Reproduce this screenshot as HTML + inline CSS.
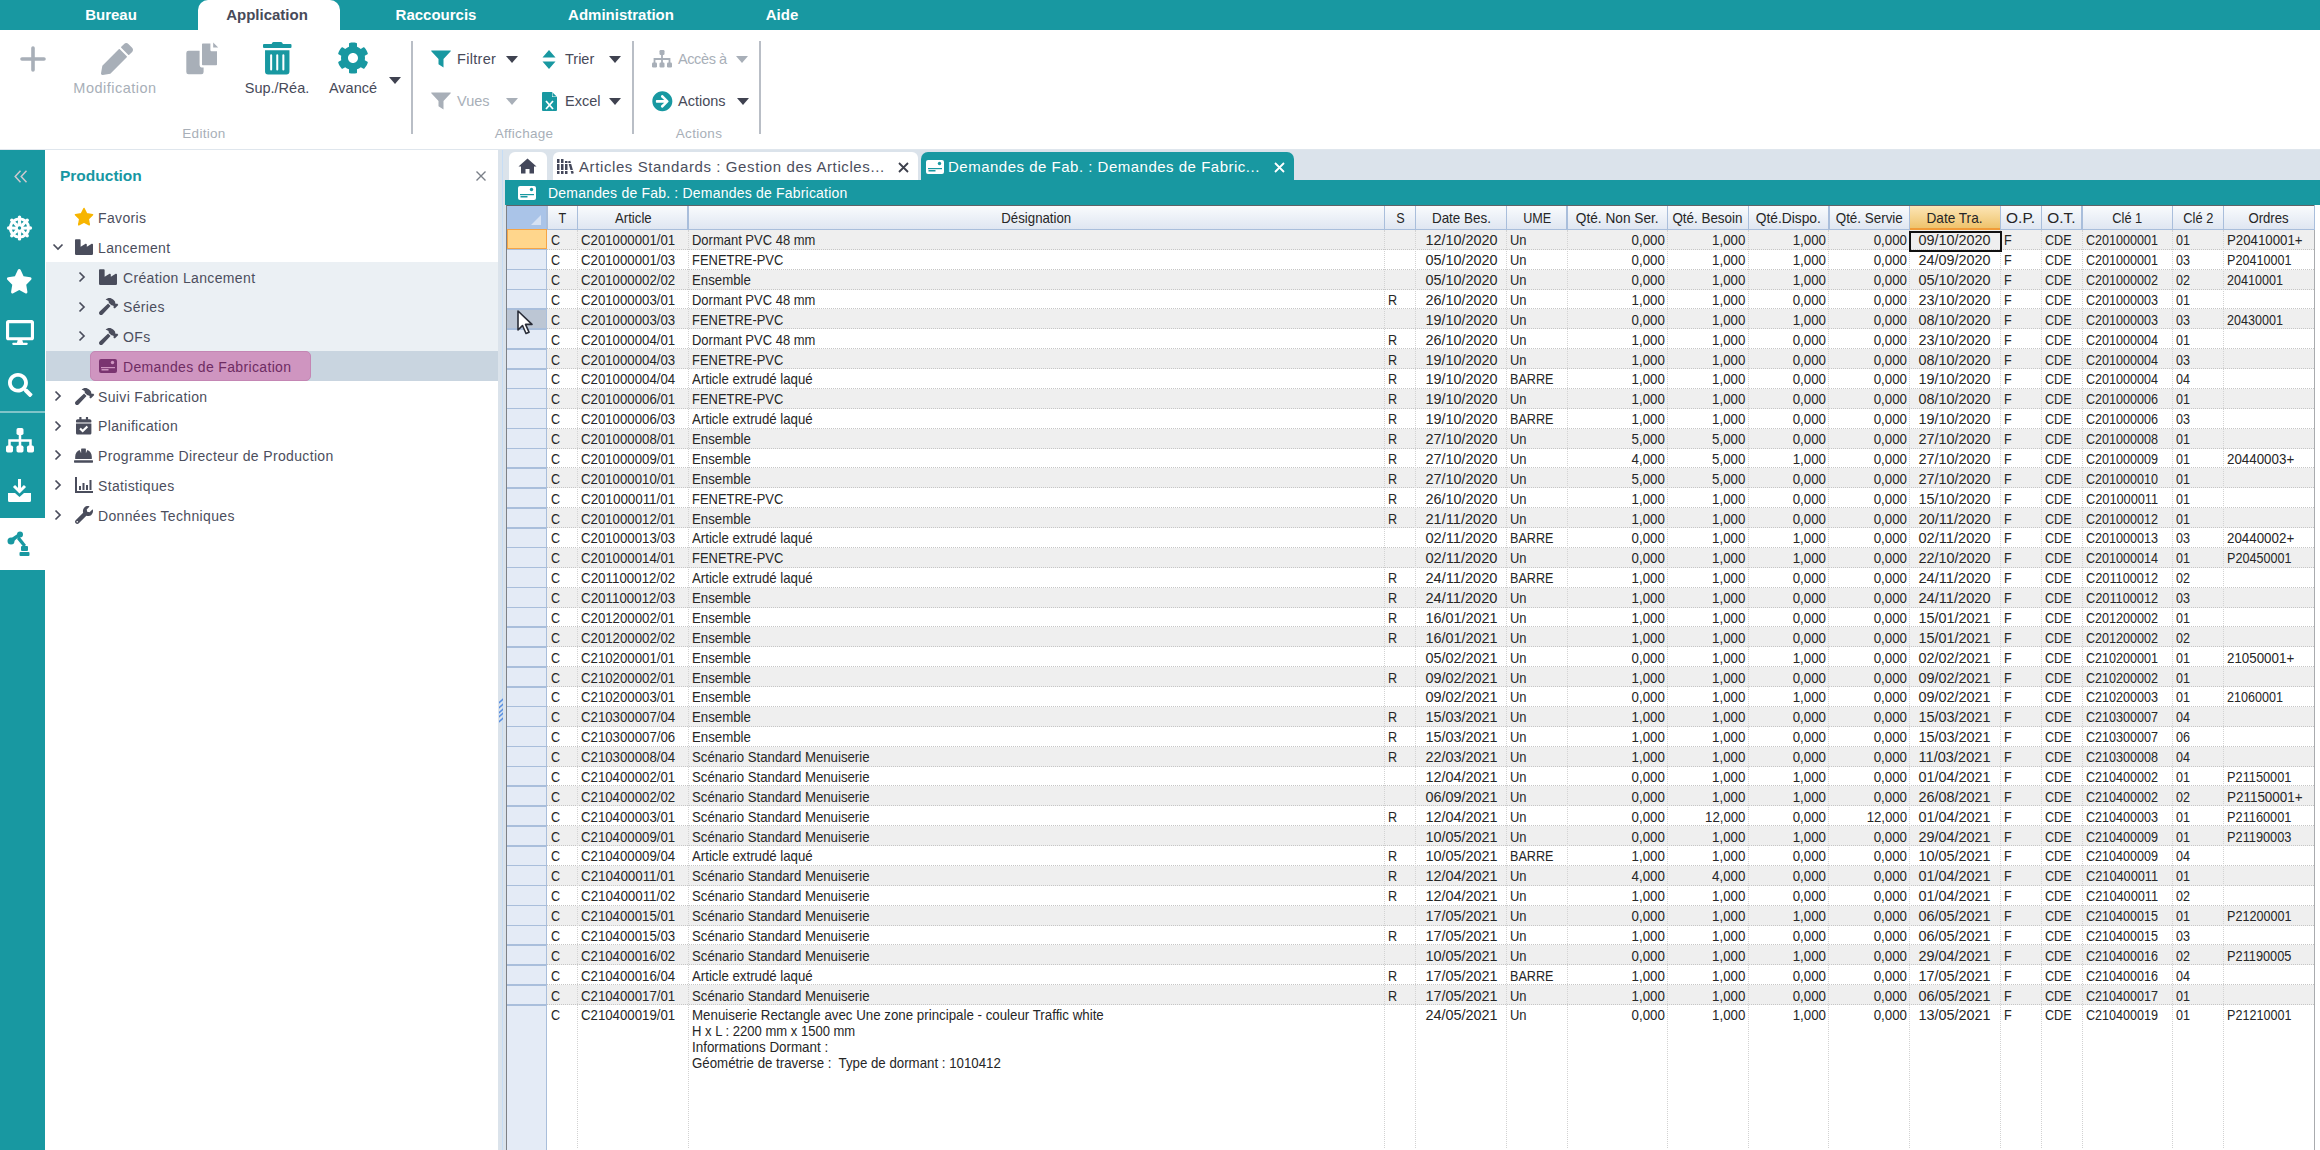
<!DOCTYPE html>
<html><head><meta charset="utf-8"><title>Demandes de Fabrication</title>
<style>
*{margin:0;padding:0;box-sizing:border-box}
html,body{width:2320px;height:1150px;overflow:hidden;background:#fff;font-family:"Liberation Sans", sans-serif;}
.a{position:absolute}
.t{position:absolute;white-space:nowrap;line-height:1}
.nav{color:#fff;font-weight:bold;font-size:15px;top:7px}
.rl{font-size:14.5px;color:#474a59}
.rg{font-size:14.5px;color:#a8afb8}
.tree{font-size:14px;color:#4b4e5d;letter-spacing:0.35px}
.g{font-size:15px;color:#262626;line-height:1;white-space:pre}
.hd{font-size:15px;color:#262626;line-height:1;white-space:pre}
svg{position:absolute;overflow:visible}
</style></head><body>

<div class="a" style="left:0;top:0;width:2320px;height:30px;background:#1898a1"></div>
<div class="a" style="left:198px;top:0;width:142px;height:31px;background:#fff;border-radius:10px 10px 0 0"></div>
<div class="t nav" style="left:-89px;width:400px;text-align:center;top:7px;">Bureau</div>
<div class="t nav" style="left:67px;width:400px;text-align:center;top:7px;color:#474a59">Application</div>
<div class="t nav" style="left:236px;width:400px;text-align:center;top:7px;">Raccourcis</div>
<div class="t nav" style="left:421px;width:400px;text-align:center;top:7px;">Administration</div>
<div class="t nav" style="left:582px;width:400px;text-align:center;top:7px;">Aide</div>
<div class="a" style="left:0;top:149px;width:2320px;height:1px;background:#dfe6ed"></div>
<div class="a" style="left:411px;top:41px;width:1.5px;height:93px;background:#b9bec6"></div>
<div class="a" style="left:632px;top:41px;width:1.5px;height:93px;background:#b9bec6"></div>
<div class="a" style="left:759px;top:41px;width:1.5px;height:93px;background:#b9bec6"></div>
<svg style="left:20px;top:46px" width="26" height="26" viewBox="0 0 26 26"><path d="M13 2v22M2 13h22" stroke="#a8afb8" stroke-width="3.6" stroke-linecap="round"/></svg>
<svg style="left:100.5px;top:42.7px" width="32" height="32" viewBox="0 0 512 512" preserveAspectRatio="none"><path d="M497.9 142.1l-46.1 46.1c-4.7 4.7-12.3 4.7-17 0l-111-111c-4.7-4.7-4.7-12.3 0-17l46.1-46.1c18.7-18.7 49.1-18.7 67.9 0l60.1 60.1c18.8 18.7 18.8 49.1 0 67.9zM284.2 99.8L21.6 362.4.4 483.9c-2.9 16.4 11.4 30.6 27.8 27.8l121.5-21.3 262.6-262.6c4.7-4.7 4.7-12.3 0-17l-111-111c-4.8-4.7-12.4-4.7-17.1 0z" fill="#a8afb8"/></svg>
<svg style="left:185px;top:41px" width="36" height="36" viewBox="0 0 36 36"><rect x="1.3" y="9.7" width="17.3" height="23.6" rx="2.2" fill="#a8afb8"/><path d="M17.8 1.3h8.8v7.8h6.6v14.3q0 2-2 2h-13.4q-2 0-2-2v-20.1q0-2 2-2z" fill="#a8afb8" stroke="#fff" stroke-width="2.4" stroke-linejoin="round"/><path d="M28.2 1.5l5 5h-5z" fill="#a8afb8"/></svg>
<svg style="left:262.5px;top:41.8px" width="28.5" height="32.6" viewBox="0 0 448 512" preserveAspectRatio="none"><path d="M32 464a48 48 0 0 0 48 48h288a48 48 0 0 0 48-48V128H32zm272-256a16 16 0 0 1 32 0v224a16 16 0 0 1-32 0zm-96 0a16 16 0 0 1 32 0v224a16 16 0 0 1-32 0zm-96 0a16 16 0 0 1 32 0v224a16 16 0 0 1-32 0zM432 32H312l-9.4-18.7A24 24 0 0 0 281.1 0H166.8a23.72 23.72 0 0 0-21.4 13.3L136 32H16A16 16 0 0 0 0 48v32a16 16 0 0 0 16 16h416a16 16 0 0 0 16-16V48a16 16 0 0 0-16-16z" fill="#1898a1"/></svg>
<svg style="left:337px;top:42px" width="32" height="32" viewBox="0 0 512 512" preserveAspectRatio="none"><path d="M487.4 315.7l-42.6-24.6c4.3-23.2 4.3-47 0-70.2l42.6-24.6c4.9-2.8 7.1-8.6 5.5-14-11.1-35.6-30-67.8-54.7-94.6-3.8-4.1-10-5.1-14.8-2.3L380.8 110c-17.9-15.4-38.5-27.3-60.8-35.1V25.8c0-5.6-3.9-10.5-9.4-11.7-36.7-8.2-74.3-7.8-109.2 0-5.5 1.2-9.4 6.1-9.4 11.7V75c-22.2 7.9-42.8 19.8-60.8 35.1L88.7 85.5c-4.9-2.8-11-1.9-14.8 2.3-24.7 26.7-43.6 58.9-54.7 94.6-1.7 5.4.6 11.2 5.5 14L67.3 221c-4.3 23.2-4.3 47 0 70.2l-42.6 24.6c-4.9 2.8-7.1 8.6-5.5 14 11.1 35.6 30 67.8 54.7 94.6 3.8 4.1 10 5.1 14.8 2.3l42.6-24.6c17.9 15.4 38.5 27.3 60.8 35.1v49.2c0 5.6 3.9 10.5 9.4 11.7 36.7 8.2 74.3 7.8 109.2 0 5.5-1.2 9.4-6.1 9.4-11.7v-49.2c22.2-7.9 42.8-19.8 60.8-35.1l42.6 24.6c4.9 2.8 11 1.9 14.8-2.3 24.7-26.7 43.6-58.9 54.7-94.6 1.5-5.5-.7-11.3-5.6-14.1zM256 336c-44.1 0-80-35.9-80-80s35.9-80 80-80 80 35.9 80 80-35.9 80-80 80z" fill="#1898a1"/></svg>
<div class="t rg" style="left:-85px;width:400px;text-align:center;top:80.7px;letter-spacing:0.5px">Modification</div>
<div class="t rl" style="left:77px;width:400px;text-align:center;top:80.7px;">Sup./Réa.</div>
<div class="t rl" style="left:153px;width:400px;text-align:center;top:80.7px;">Avancé</div>
<div class="t rg" style="left:4px;width:400px;text-align:center;top:126.5px;font-size:13.5px;letter-spacing:0.3px">Edition</div>
<div class="t rg" style="left:324px;width:400px;text-align:center;top:126.5px;font-size:13.5px;letter-spacing:0.3px">Affichage</div>
<div class="t rg" style="left:499px;width:400px;text-align:center;top:126.5px;font-size:13.5px;letter-spacing:0.3px">Actions</div>
<svg style="left:389px;top:76.5px" width="12" height="7" viewBox="0 0 12 7"><path d="M0 0h12l-6 7z" fill="#3f4250"/></svg>
<svg style="left:431px;top:50px" width="20" height="18" viewBox="0 0 20 18"><path d="M0.5 0.5h19q0.6 0 0.2 0.7l-7.2 7.8v8.5l-5-3.2v-5.3l-7.2-7.8q-0.4-0.7 0.2-0.7z" fill="#1898a1"/></svg>
<svg style="left:431px;top:92px" width="20" height="18" viewBox="0 0 20 18"><path d="M0.5 0.5h19q0.6 0 0.2 0.7l-7.2 7.8v8.5l-5-3.2v-5.3l-7.2-7.8q-0.4-0.7 0.2-0.7z" fill="#a8afb8"/></svg>
<div class="t rl" style="left:457px;top:52.2px;letter-spacing:0.3px">Filtrer</div>
<div class="t rg" style="left:457px;top:94.1px">Vues</div>
<svg style="left:506px;top:55.5px" width="12" height="7" viewBox="0 0 12 7"><path d="M0 0h12l-6 7z" fill="#3f4250"/></svg>
<svg style="left:506px;top:97.5px" width="12" height="7" viewBox="0 0 12 7"><path d="M0 0h12l-6 7z" fill="#a8afb8"/></svg>
<svg style="left:542px;top:50px" width="14" height="19" viewBox="0 0 14 19"><path d="M7 0l6.5 7.5h-13z M7 19l6.5-7.5h-13z" fill="#1898a1"/></svg>
<div class="t rl" style="left:565px;top:52.2px">Trier</div>
<svg style="left:609px;top:55.5px" width="12" height="7" viewBox="0 0 12 7"><path d="M0 0h12l-6 7z" fill="#3f4250"/></svg>
<svg style="left:542px;top:92px" width="15" height="19" viewBox="0 0 15 19"><path d="M1 0h9l5 5v13q0 1-1 1h-13q-1 0-1-1v-17q0-1 1-1z" fill="#1898a1"/><path d="M10 0v5h5z" fill="#fff"/><path d="M10.5 0.5l4 4h-4z" fill="#1898a1"/><path d="M4 9l7 8M11 9l-7 8" stroke="#fff" stroke-width="1.8"/></svg>
<div class="t rl" style="left:565px;top:94.1px">Excel</div>
<svg style="left:609px;top:97.5px" width="12" height="7" viewBox="0 0 12 7"><path d="M0 0h12l-6 7z" fill="#3f4250"/></svg>
<svg style="left:652px;top:50px" width="20" height="18.0" viewBox="0 0 20 18"><rect x="7.5" y="0" width="5" height="5" rx="1.2" fill="#a8afb8"/><rect x="0" y="12.5" width="5" height="5" rx="1.2" fill="#a8afb8"/><rect x="7.5" y="12.5" width="5" height="5" rx="1.2" fill="#a8afb8"/><rect x="15" y="12.5" width="5" height="5" rx="1.2" fill="#a8afb8"/><path d="M10 4v9M2.5 13v-4h15v4" stroke="#a8afb8" stroke-width="1.8" fill="none"/></svg>
<div class="t rg" style="left:678px;top:52.2px;letter-spacing:-0.4px">Accès à</div>
<svg style="left:736px;top:55.5px" width="12" height="7" viewBox="0 0 12 7"><path d="M0 0h12l-6 7z" fill="#a8afb8"/></svg>
<svg style="left:651.5px;top:91px" width="20.7" height="20.7" viewBox="0 0 512 512" preserveAspectRatio="none"><path d="M256 8c137 0 248 111 248 248S393 504 256 504 8 393 8 256 119 8 256 8zm-28.9 143.6l75.5 72.4H120c-13.3 0-24 10.7-24 24v16c0 13.3 10.7 24 24 24h182.6l-75.5 72.4c-9.7 9.3-9.9 24.8-.4 34.3l11 10.9c9.4 9.4 24.6 9.4 33.9 0L404.3 273c9.4-9.4 9.4-24.6 0-33.9L271.6 106.3c-9.4-9.4-24.6-9.4-33.9 0l-11 10.9c-9.5 9.6-9.3 25.1.4 34.4z" fill="#1898a1"/></svg>
<div class="t rl" style="left:678px;top:94.1px">Actions</div>
<svg style="left:737px;top:97.5px" width="12" height="7" viewBox="0 0 12 7"><path d="M0 0h12l-6 7z" fill="#3f4250"/></svg>
<div class="a" style="left:0;top:150px;width:44.5px;height:1000px;background:#1898a1"></div>
<div class="a" style="left:0;top:518px;width:44.5px;height:52px;background:#fff"></div>
<div class="a" style="left:0;top:411px;width:44.5px;height:2px;background:#7fc4c9"></div>
<svg style="left:13.5px;top:170px" width="14" height="13" viewBox="0 0 14 13"><path d="M6.5 0.8l-5.3 5.7 5.3 5.7M12.5 0.8l-5.3 5.7 5.3 5.7" stroke="#cdc8ce" stroke-width="1.5" fill="none"/></svg>
<svg style="left:0;top:0" width="1" height="1"><circle cx="19.5" cy="228" r="10.6" fill="#fff"/><circle cx="19.50" cy="217.10" r="1.7" fill="#fff"/><circle cx="27.21" cy="220.29" r="1.7" fill="#fff"/><circle cx="30.40" cy="228.00" r="1.7" fill="#fff"/><circle cx="27.21" cy="235.71" r="1.7" fill="#fff"/><circle cx="19.50" cy="238.90" r="1.7" fill="#fff"/><circle cx="11.79" cy="235.71" r="1.7" fill="#fff"/><circle cx="8.60" cy="228.00" r="1.7" fill="#fff"/><circle cx="11.79" cy="220.29" r="1.7" fill="#fff"/><path d="M21.33 224.22 L21.01 220.55 A7.6 7.6 0 0 1 23.70 221.67 L20.88 224.03 A4.2 4.2 0 0 0 21.33 224.22Z" fill="#1898a1"/><path d="M23.47 226.62 L25.83 223.80 A7.6 7.6 0 0 1 26.95 226.49 L23.28 226.17 A4.2 4.2 0 0 0 23.47 226.62Z" fill="#1898a1"/><path d="M23.28 229.83 L26.95 229.51 A7.6 7.6 0 0 1 25.83 232.20 L23.47 229.38 A4.2 4.2 0 0 0 23.28 229.83Z" fill="#1898a1"/><path d="M20.88 231.97 L23.70 234.33 A7.6 7.6 0 0 1 21.01 235.45 L21.33 231.78 A4.2 4.2 0 0 0 20.88 231.97Z" fill="#1898a1"/><path d="M17.67 231.78 L17.99 235.45 A7.6 7.6 0 0 1 15.30 234.33 L18.12 231.97 A4.2 4.2 0 0 0 17.67 231.78Z" fill="#1898a1"/><path d="M15.53 229.38 L13.17 232.20 A7.6 7.6 0 0 1 12.05 229.51 L15.72 229.83 A4.2 4.2 0 0 0 15.53 229.38Z" fill="#1898a1"/><path d="M15.72 226.17 L12.05 226.49 A7.6 7.6 0 0 1 13.17 223.80 L15.53 226.62 A4.2 4.2 0 0 0 15.72 226.17Z" fill="#1898a1"/><path d="M18.12 224.03 L15.30 221.67 A7.6 7.6 0 0 1 17.99 220.55 L17.67 224.22 A4.2 4.2 0 0 0 18.12 224.03Z" fill="#1898a1"/><circle cx="19.5" cy="228" r="1.7" fill="#1898a1"/></svg>
<svg style="left:6.3px;top:268.5px" width="26.5" height="24.5" viewBox="0 0 576 512" preserveAspectRatio="none"><path d="M259.3 17.8L194 150.2 47.9 171.5c-26.2 3.8-36.7 36.1-17.7 54.6l105.7 103-25 145.5c-4.5 26.3 23.2 46 46.4 33.7L288 439.6l130.7 68.7c23.2 12.2 50.9-7.4 46.4-33.7l-25-145.5 105.7-103c19-18.5 8.5-50.8-17.7-54.6L382 150.2 316.7 17.8c-11.7-23.6-45.6-23.9-57.4 0z" fill="#fff"/></svg>
<svg style="left:5.5px;top:320px" width="28" height="25" viewBox="0 0 576 512" preserveAspectRatio="none"><path d="M528 0H48C21.5 0 0 21.5 0 48v320c0 26.5 21.5 48 48 48h192l-16 48h-72c-13.3 0-24 10.7-24 24s10.7 24 24 24h272c13.3 0 24-10.7 24-24s-10.7-24-24-24h-72l-16-48h192c26.5 0 48-21.5 48-48V48c0-26.5-21.5-48-48-48zm-16 352H64V64h448v288z" fill="#fff"/></svg>
<svg style="left:7.6px;top:372.8px" width="24.5" height="24" viewBox="0 0 512 512" preserveAspectRatio="none"><path d="M505 442.7L405.3 343c-4.5-4.5-10.6-7-17-7H372c27.6-35.3 44-79.7 44-128C416 93.1 322.9 0 208 0S0 93.1 0 208s93.1 208 208 208c48.3 0 92.7-16.4 128-44v16.3c0 6.4 2.5 12.5 7 17l99.7 99.7c9.4 9.4 24.6 9.4 33.9 0l28.3-28.3c9.4-9.4 9.4-24.6.1-34zM208 336c-70.7 0-128-57.2-128-128 0-70.7 57.2-128 128-128 70.7 0 128 57.2 128 128 0 70.7-57.2 128-128 128z" fill="#fff"/></svg>
<svg style="left:5.5px;top:428px" width="28" height="25.2" viewBox="0 0 20 18"><rect x="7.5" y="0" width="5" height="5" rx="1.2" fill="#fff"/><rect x="0" y="12.5" width="5" height="5" rx="1.2" fill="#fff"/><rect x="7.5" y="12.5" width="5" height="5" rx="1.2" fill="#fff"/><rect x="15" y="12.5" width="5" height="5" rx="1.2" fill="#fff"/><path d="M10 4v9M2.5 13v-4h15v4" stroke="#fff" stroke-width="1.8" fill="none"/></svg>
<svg style="left:7px;top:478px" width="25" height="25" viewBox="0 0 25 25"><path d="M12.5 1v12M7 8l5.5 5.5 5.5-5.5" stroke="#fff" stroke-width="3" fill="none"/><path d="M1 15h7l4.5 4 4.5-4h7v7.5q0 1.5-1.5 1.5h-20q-1.5 0-1.5-1.5z" fill="#fff"/></svg>
<svg style="left:7px;top:531px" width="24" height="26" viewBox="0 0 24 26"><circle cx="4" cy="10" r="3.5" fill="#1898a1"/><path d="M3 8l9-6 2 2-8 7z" fill="#1898a1"/><circle cx="13" cy="3.5" r="3" fill="#1898a1"/><path d="M12 5l7 9-2.5 2-6.5-8z" fill="#1898a1"/><rect x="14" y="15" width="7" height="5" rx="1" fill="#1898a1"/><rect x="12.5" y="21" width="10" height="4" rx="1" fill="#1898a1"/></svg>
<div class="t" style="left:60px;top:168px;font-size:15.5px;font-weight:bold;color:#1797a3">Production</div>
<svg style="left:476px;top:171px" width="10" height="10" viewBox="0 0 10 10"><path d="M0.5 0.5l9 9M9.5 0.5l-9 9" stroke="#7a7f88" stroke-width="1.4"/></svg>
<div class="a" style="left:46px;top:261.5px;width:452px;height:89.5px;background:#ebf0f4"></div>
<div class="a" style="left:46px;top:351px;width:452px;height:29.5px;background:#c9d5e0"></div>
<div class="a" style="left:90px;top:350.5px;width:221px;height:30px;background:#cf95c0;border:1px solid #c486b4;border-radius:5px"></div>
<svg style="left:0;top:0" width="1" height="1"><polygon points="84.00,208.50 86.65,213.86 92.56,214.72 88.28,218.89 89.29,224.78 84.00,222.00 78.71,224.78 79.72,218.89 75.44,214.72 81.35,213.86" fill="#f7b500" stroke="#f7b500" stroke-width="1.5" stroke-linejoin="round"/></svg>
<div class="t tree" style="left:98px;top:210.85px;color:#4b4e5d">Favoris</div>
<svg style="left:52px;top:243px" width="12" height="8" viewBox="0 0 12 8"><path d="M1.5 1.5l4.5 4.5 4.5-4.5" stroke="#4a4d5c" stroke-width="1.7" fill="none"/></svg>
<svg style="left:75.3px;top:238px" width="18" height="18" viewBox="0 0 512 512" preserveAspectRatio="none"><path d="M475.115 163.781L336 252.309v-68.28c0-18.916-20.931-30.399-36.885-20.248L160 252.309V56c0-13.255-10.745-24-24-24H24C10.745 32 0 42.745 0 56v400c0 13.255 10.745 24 24 24h464c13.255 0 24-10.745 24-24V184.029c0-18.917-20.931-30.399-36.885-20.248z" fill="#4a4d5c"/></svg>
<div class="t tree" style="left:98px;top:240.85px;color:#4b4e5d">Lancement</div>
<svg style="left:78px;top:271px" width="8" height="12" viewBox="0 0 8 12"><path d="M1.5 1.5l4.5 4.5-4.5 4.5" stroke="#4a4d5c" stroke-width="1.7" fill="none"/></svg>
<svg style="left:99.3px;top:268px" width="18" height="18" viewBox="0 0 512 512" preserveAspectRatio="none"><path d="M475.115 163.781L336 252.309v-68.28c0-18.916-20.931-30.399-36.885-20.248L160 252.309V56c0-13.255-10.745-24-24-24H24C10.745 32 0 42.745 0 56v400c0 13.255 10.745 24 24 24h464c13.255 0 24-10.745 24-24V184.029c0-18.917-20.931-30.399-36.885-20.248z" fill="#4a4d5c"/></svg>
<div class="t tree" style="left:123px;top:270.85px;color:#4b4e5d">Création Lancement</div>
<svg style="left:78px;top:300.5px" width="8" height="12" viewBox="0 0 8 12"><path d="M1.5 1.5l4.5 4.5-4.5 4.5" stroke="#4a4d5c" stroke-width="1.7" fill="none"/></svg>
<svg style="left:98.8px;top:298.0px" width="19.2" height="17.1" viewBox="0 0 576 512" preserveAspectRatio="none"><path d="M571.31 193.94l-22.63-22.63c-6.25-6.25-16.38-6.25-22.63 0l-11.31 11.31-28.9-28.9c5.63-21.31.36-44.9-16.35-61.61l-45.25-45.25c-62.48-62.48-163.79-62.48-226.28 0l90.51 45.25v18.75c0 16.97 6.74 33.25 18.75 45.25l49.14 49.14c16.71 16.71 40.3 21.980 61.61 16.35l28.9 28.9-11.31 11.31c-6.25 6.25-6.25 16.38 0 22.63l22.63 22.63c6.25 6.25 16.38 6.25 22.63 0l90.51-90.51c6.23-6.24 6.23-16.37-.02-22.62zm-286.72-15.2c-3.7-3.7-6.840-7.79-9.85-11.95L19.64 404.96c-25.57 23.88-26.26 64.19-1.53 88.93s65.05 24.05 88.93-1.53l238.13-255.07c-3.96-2.91-7.9-5.87-11.44-9.41l-49.14-49.14z" fill="#4a4d5c"/></svg>
<div class="t tree" style="left:123px;top:300.35px;color:#4b4e5d">Séries</div>
<svg style="left:78px;top:330px" width="8" height="12" viewBox="0 0 8 12"><path d="M1.5 1.5l4.5 4.5-4.5 4.5" stroke="#4a4d5c" stroke-width="1.7" fill="none"/></svg>
<svg style="left:98.8px;top:327.5px" width="19.2" height="17.1" viewBox="0 0 576 512" preserveAspectRatio="none"><path d="M571.31 193.94l-22.63-22.63c-6.25-6.25-16.38-6.25-22.63 0l-11.31 11.31-28.9-28.9c5.63-21.31.36-44.9-16.35-61.61l-45.25-45.25c-62.48-62.48-163.79-62.48-226.28 0l90.51 45.25v18.75c0 16.97 6.74 33.25 18.75 45.25l49.14 49.14c16.71 16.71 40.3 21.980 61.61 16.35l28.9 28.9-11.31 11.31c-6.25 6.25-6.25 16.38 0 22.63l22.63 22.63c6.25 6.25 16.38 6.25 22.63 0l90.51-90.51c6.23-6.24 6.23-16.37-.02-22.62zm-286.72-15.2c-3.7-3.7-6.840-7.79-9.85-11.95L19.64 404.96c-25.57 23.88-26.26 64.19-1.53 88.93s65.05 24.05 88.93-1.53l238.13-255.07c-3.96-2.91-7.9-5.87-11.44-9.41l-49.14-49.14z" fill="#4a4d5c"/></svg>
<div class="t tree" style="left:123px;top:329.85px;color:#4b4e5d">OFs</div>
<svg style="left:99px;top:359px" width="18" height="14" viewBox="0 0 18 14"><rect x="0" y="0" width="18" height="14" rx="2" fill="#7a3470"/><circle cx="13.5" cy="3.5" r="1.7" fill="#cf95c0"/><rect x="2" y="8" width="14" height="1.2" fill="#cf95c0"/><rect x="2.5" y="10" width="7" height="1.5" fill="#cf95c0"/></svg>
<div class="t tree" style="left:123px;top:359.85px;color:#6e2c63">Demandes de Fabrication</div>
<svg style="left:54px;top:390px" width="8" height="12" viewBox="0 0 8 12"><path d="M1.5 1.5l4.5 4.5-4.5 4.5" stroke="#4a4d5c" stroke-width="1.7" fill="none"/></svg>
<svg style="left:74.8px;top:387.5px" width="19.2" height="17.1" viewBox="0 0 576 512" preserveAspectRatio="none"><path d="M571.31 193.94l-22.63-22.63c-6.25-6.25-16.38-6.25-22.63 0l-11.31 11.31-28.9-28.9c5.63-21.31.36-44.9-16.35-61.61l-45.25-45.25c-62.48-62.48-163.79-62.48-226.28 0l90.51 45.25v18.75c0 16.97 6.74 33.25 18.75 45.25l49.14 49.14c16.71 16.71 40.3 21.980 61.61 16.35l28.9 28.9-11.31 11.31c-6.25 6.25-6.25 16.38 0 22.63l22.63 22.63c6.25 6.25 16.38 6.25 22.63 0l90.51-90.51c6.23-6.24 6.23-16.37-.02-22.62zm-286.72-15.2c-3.7-3.7-6.840-7.79-9.85-11.95L19.64 404.96c-25.57 23.88-26.26 64.19-1.53 88.93s65.05 24.05 88.93-1.53l238.13-255.07c-3.96-2.91-7.9-5.87-11.44-9.41l-49.14-49.14z" fill="#4a4d5c"/></svg>
<div class="t tree" style="left:98px;top:389.85px;color:#4b4e5d">Suivi Fabrication</div>
<svg style="left:54px;top:419.5px" width="8" height="12" viewBox="0 0 8 12"><path d="M1.5 1.5l4.5 4.5-4.5 4.5" stroke="#4a4d5c" stroke-width="1.7" fill="none"/></svg>
<svg style="left:76px;top:416.9px" width="15.4" height="17.6" viewBox="0 0 448 512" preserveAspectRatio="none"><path d="M436 160H12c-6.627 0-12-5.373-12-12v-36c0-26.51 21.49-48 48-48h48V12c0-6.627 5.373-12 12-12h40c6.627 0 12 5.373 12 12v52h128V12c0-6.627 5.373-12 12-12h40c6.627 0 12 5.373 12 12v52h48c26.51 0 48 21.49 48 48v36c0 6.627-5.373 12-12 12zM12 192h424c6.627 0 12 5.373 12 12v260c0 26.51-21.49 48-48 48H48c-26.51 0-48-21.49-48-48V204c0-6.627 5.373-12 12-12zm333.296 95.947l-28.169-28.398c-4.667-4.705-12.265-4.736-16.97-.068L194.12 364.665l-45.98-46.352c-4.667-4.705-12.266-4.736-16.971-.068l-28.397 28.17c-4.705 4.667-4.736 12.265-.068 16.97l82.601 83.269c4.667 4.705 12.265 4.736 16.97.068l142.953-141.805c4.705-4.667 4.736-12.265.068-16.97z" fill="#4a4d5c"/></svg>
<div class="t tree" style="left:98px;top:419.35px;color:#4b4e5d">Planification</div>
<svg style="left:54px;top:449px" width="8" height="12" viewBox="0 0 8 12"><path d="M1.5 1.5l4.5 4.5-4.5 4.5" stroke="#4a4d5c" stroke-width="1.7" fill="none"/></svg>
<svg style="left:73.9px;top:445.8px" width="19" height="19" viewBox="0 0 512 512" preserveAspectRatio="none"><path d="M480 288c0-80.25-49.28-148.92-119.19-177.62L320 192V80a16 16 0 0 0-16-16h-96a16 16 0 0 0-16 16v112l-40.81-81.62C81.28 139.08 32 207.750 32 288v64h448zm16 96H16a16 16 0 0 0-16 16v32a16 16 0 0 0 16 16h480a16 16 0 0 0 16-16v-32a16 16 0 0 0-16-16z" fill="#4a4d5c"/></svg>
<div class="t tree" style="left:98px;top:448.85px;color:#4b4e5d">Programme Directeur de Production</div>
<svg style="left:54px;top:479px" width="8" height="12" viewBox="0 0 8 12"><path d="M1.5 1.5l4.5 4.5-4.5 4.5" stroke="#4a4d5c" stroke-width="1.7" fill="none"/></svg>
<svg style="left:75px;top:477px" width="18" height="16" viewBox="0 0 18 16"><path d="M1 0v15h17" stroke="#4a4d5c" stroke-width="2" fill="none"/><rect x="4" y="9" width="2" height="4" fill="#4a4d5c"/><rect x="7.5" y="6" width="2" height="7" fill="#4a4d5c"/><rect x="11" y="8" width="2" height="5" fill="#4a4d5c"/><rect x="14.5" y="3" width="2" height="10" fill="#4a4d5c"/></svg>
<div class="t tree" style="left:98px;top:478.85px;color:#4b4e5d">Statistiques</div>
<svg style="left:54px;top:509px" width="8" height="12" viewBox="0 0 8 12"><path d="M1.5 1.5l4.5 4.5-4.5 4.5" stroke="#4a4d5c" stroke-width="1.7" fill="none"/></svg>
<svg style="left:74.9px;top:505.9px" width="18" height="18" viewBox="0 0 512 512" preserveAspectRatio="none"><path d="M507.73 109.1c-2.24-9.03-13.54-12.09-20.12-5.51l-74.36 74.36-67.88-11.31-11.310-67.88 74.36-74.36c6.62-6.62 3.43-17.9-5.66-20.16-47.38-11.74-99.55.91-136.58 37.93-39.64 39.64-50.55 97.1-34.05 147.2L18.74 402.76c-24.99 24.99-24.99 65.51 0 90.5 24.99 24.99 65.51 24.99 90.5 0l213.21-213.21c50.12 16.71 107.47 5.68 147.37-34.22 37.07-37.07 49.7-89.32 37.91-136.73zM64 472c-13.25 0-24-10.75-24-24 0-13.26 10.75-24 24-24s24 10.74 24 24c0 13.25-10.75 24-24 24z" fill="#4a4d5c"/></svg>
<div class="t tree" style="left:98px;top:508.85px;color:#4b4e5d">Données Techniques</div>
<div class="a" style="left:498px;top:150px;width:1822px;height:1000px;background:#dbe3eb"></div>
<div class="a" style="left:501.5px;top:150px;width:1.5px;height:1000px;background:#c6ddf5"></div>
<div class="a" style="left:498.5px;top:700.0px;width:4px;height:2px;background:#5a8fe0;transform:skewY(-40deg)"></div>
<div class="a" style="left:498.5px;top:704.8px;width:4px;height:2px;background:#5a8fe0;transform:skewY(-40deg)"></div>
<div class="a" style="left:498.5px;top:709.6px;width:4px;height:2px;background:#5a8fe0;transform:skewY(-40deg)"></div>
<div class="a" style="left:498.5px;top:714.4px;width:4px;height:2px;background:#5a8fe0;transform:skewY(-40deg)"></div>
<div class="a" style="left:498.5px;top:719.2px;width:4px;height:2px;background:#5a8fe0;transform:skewY(-40deg)"></div>
<div class="a" style="left:508.5px;top:152px;width:38px;height:29px;background:#fff;border-radius:6px 6px 0 0"></div>
<svg style="left:518px;top:158px" width="19" height="16" viewBox="0 0 19 16"><path d="M9.5 0.5l9 8h-2.5v7h-4.5v-4.5h-4v4.5h-4.5v-7h-2.5z" fill="#43475a"/></svg>
<div class="a" style="left:553px;top:152px;width:365px;height:29px;background:#fff;border-radius:6px 6px 0 0"></div>
<svg style="left:557px;top:159px" width="17" height="15" viewBox="0 0 17 15"><rect x="0" y="0" width="2.5" height="15" fill="#43475a"/><rect x="4" y="0" width="2.5" height="15" fill="#43475a"/><rect x="8" y="2" width="2.5" height="13" fill="#43475a"/><path d="M11 2.5l2.3-.8 3.5 12.5-2.3.8z" fill="#43475a"/><rect x="0" y="4" width="16" height="1" fill="#fff"/><rect x="0" y="11" width="16" height="1" fill="#fff"/></svg>
<div class="t" style="left:579px;top:159.4px;font-size:15px;letter-spacing:0.6px;color:#4b4e5d">Articles Standards : Gestion des Articles...</div>
<svg style="left:898px;top:162px" width="11" height="11" viewBox="0 0 11 11"><path d="M1 1l9 9M10 1l-9 9" stroke="#3d404c" stroke-width="1.8"/></svg>
<div class="a" style="left:920.5px;top:152px;width:373px;height:29px;background:#1898a1;border-radius:7px 7px 0 0"></div>
<svg style="left:926px;top:160px" width="18" height="14" viewBox="0 0 18 14"><rect x="0" y="0" width="18" height="14" rx="2" fill="#fff"/><circle cx="13.5" cy="3.5" r="1.7" fill="#1898a1"/><rect x="2" y="8" width="14" height="1.2" fill="#1898a1"/><rect x="2.5" y="10" width="7" height="1.5" fill="#1898a1"/></svg>
<div class="t" style="left:948px;top:159.4px;font-size:15px;letter-spacing:0.5px;color:#fff">Demandes de Fab. : Demandes de Fabric...</div>
<svg style="left:1274px;top:162px" width="11" height="11" viewBox="0 0 11 11"><path d="M1 1l9 9M10 1l-9 9" stroke="#fff" stroke-width="1.8"/></svg>
<div class="a" style="left:504.8px;top:180px;width:1815.2px;height:25px;background:#1898a1"></div>
<svg style="left:518px;top:186px" width="18" height="14" viewBox="0 0 18 14"><rect x="0" y="0" width="18" height="14" rx="2" fill="#fff"/><circle cx="13.5" cy="3.5" r="1.7" fill="#1898a1"/><rect x="2" y="8" width="14" height="1.2" fill="#1898a1"/><rect x="2.5" y="10" width="7" height="1.5" fill="#1898a1"/></svg>
<div class="t" style="left:548px;top:186.4px;font-size:14px;letter-spacing:0.2px;color:#fff">Demandes de Fab. : Demandes de Fabrication</div>
<div class="a" style="left:505.5px;top:205px;width:1809.5px;height:945px;background:#fff;border-left:1.5px solid #7d8187;border-top:1px solid #5f6368;border-right:1px solid #a0a4a8"></div>
<div class="a" style="left:2314px;top:205px;width:6px;height:945px;background:#fff;border-left:1.5px solid #a9abae"></div>
<div class="a" style="left:507px;top:206px;width:40px;height:945px;background:#e4ebf6;border-right:1.5px solid #a9bedb"></div>
<div class="a" style="left:547px;top:206px;width:1767.3000000000002px;height:24px;background:linear-gradient(#f9fbfd,#dfe6f1);border-bottom:1.5px solid #a9bedb"></div>
<div class="a" style="left:507px;top:206px;width:40px;height:24px;background:#aac4e8;border-bottom:1.5px solid #a9bedb"></div>
<svg style="left:531px;top:215px" width="10" height="10" viewBox="0 0 10 10"><path d="M10 0v10h-10z" fill="#d6e2f4"/></svg>
<div class="a" style="left:1909.3px;top:206px;width:91.0px;height:24px;background:linear-gradient(#fce6b6,#efc36c);border-bottom:2px solid #f09a38;border-left:1.5px solid #f5a84a"></div>
<div class="a" style="left:546.25px;top:206px;width:1.5px;height:24px;background:#a9bedb"></div>
<div class="t hd" style="left:547px;width:30.5px;text-align:center;top:210px;transform:scaleX(0.8420);transform-origin:50% 0">T</div>
<div class="a" style="left:576.75px;top:206px;width:1.5px;height:24px;background:#a9bedb"></div>
<div class="t hd" style="left:577.5px;width:110.7px;text-align:center;top:210px;transform:scaleX(0.8780);transform-origin:50% 0">Article</div>
<div class="a" style="left:687.45px;top:206px;width:1.5px;height:24px;background:#a9bedb"></div>
<div class="t hd" style="left:688.2px;width:696.5px;text-align:center;top:210px;transform:scaleX(0.8829);transform-origin:50% 0">Désignation</div>
<div class="a" style="left:1383.95px;top:206px;width:1.5px;height:24px;background:#a9bedb"></div>
<div class="t hd" style="left:1384.7px;width:31.0px;text-align:center;top:210px;transform:scaleX(0.8420);transform-origin:50% 0">S</div>
<div class="a" style="left:1414.95px;top:206px;width:1.5px;height:24px;background:#a9bedb"></div>
<div class="t hd" style="left:1415.7px;width:90.9px;text-align:center;top:210px;transform:scaleX(0.8956);transform-origin:50% 0">Date Bes.</div>
<div class="a" style="left:1505.85px;top:206px;width:1.5px;height:24px;background:#a9bedb"></div>
<div class="t hd" style="left:1506.6px;width:60.4px;text-align:center;top:210px;transform:scaleX(0.8420);transform-origin:50% 0">UME</div>
<div class="a" style="left:1566.25px;top:206px;width:1.5px;height:24px;background:#a9bedb"></div>
<div class="t hd" style="left:1567px;width:100.4px;text-align:center;top:210px;transform:scaleX(0.9113);transform-origin:50% 0">Qté. Non Ser.</div>
<div class="a" style="left:1666.65px;top:206px;width:1.5px;height:24px;background:#a9bedb"></div>
<div class="t hd" style="left:1667.4px;width:80.9px;text-align:center;top:210px;transform:scaleX(0.8941);transform-origin:50% 0">Qté. Besoin</div>
<div class="a" style="left:1747.55px;top:206px;width:1.5px;height:24px;background:#a9bedb"></div>
<div class="t hd" style="left:1748.3px;width:80.5px;text-align:center;top:210px;transform:scaleX(0.9198);transform-origin:50% 0">Qté.Dispo.</div>
<div class="a" style="left:1828.05px;top:206px;width:1.5px;height:24px;background:#a9bedb"></div>
<div class="t hd" style="left:1828.8px;width:80.5px;text-align:center;top:210px;transform:scaleX(0.8943);transform-origin:50% 0">Qté. Servie</div>
<div class="a" style="left:1908.55px;top:206px;width:1.5px;height:24px;background:#a9bedb"></div>
<div class="t hd" style="left:1909.3px;width:91.0px;text-align:center;top:210px;transform:scaleX(0.9086);transform-origin:50% 0">Date Tra.</div>
<div class="a" style="left:1999.55px;top:206px;width:1.5px;height:24px;background:#a9bedb"></div>
<div class="t hd" style="left:2000.3px;width:41.1px;text-align:center;top:210px;transform:scaleX(1.0288);transform-origin:50% 0">O.P.</div>
<div class="a" style="left:2040.65px;top:206px;width:1.5px;height:24px;background:#a9bedb"></div>
<div class="t hd" style="left:2041.4px;width:40.8px;text-align:center;top:210px;transform:scaleX(1.0244);transform-origin:50% 0">O.T.</div>
<div class="a" style="left:2081.45px;top:206px;width:1.5px;height:24px;background:#a9bedb"></div>
<div class="t hd" style="left:2082.2px;width:90.5px;text-align:center;top:210px;transform:scaleX(0.8567);transform-origin:50% 0">Clé 1</div>
<div class="a" style="left:2171.95px;top:206px;width:1.5px;height:24px;background:#a9bedb"></div>
<div class="t hd" style="left:2172.7px;width:50.6px;text-align:center;top:210px;transform:scaleX(0.8567);transform-origin:50% 0">Clé 2</div>
<div class="a" style="left:2222.55px;top:206px;width:1.5px;height:24px;background:#a9bedb"></div>
<div class="t hd" style="left:2223.3px;width:91.0px;text-align:center;top:210px;transform:scaleX(0.8772);transform-origin:50% 0">Ordres</div>
<div class="a" style="left:2313.5px;top:206px;width:1.5px;height:24px;background:#a9bedb"></div>
<div class="a" style="left:547px;top:229.90px;width:1767.3px;height:19.88px;background:#efefef"></div>
<div class="a" style="left:547px;top:248.78px;width:1767.3px;height:1px;border-top:1px dotted #c6c6c6"></div>
<div class="a" style="left:507px;top:248.78px;width:40px;height:1.5px;background:#a9bedb"></div>
<div class="a" style="left:507px;top:229.40px;width:40px;height:19.88px;background:#ffd68c;border:1px solid #f5a445;border-right:1.5px solid #f5a445"></div>
<div class="t g" style="left:550.5px;top:232.30px;transform:scaleX(0.8420);transform-origin:0 0">C</div>
<div class="t g" style="left:581.0px;top:232.30px;transform:scaleX(0.8817);transform-origin:0 0">C201000001/01</div>
<div class="t g" style="left:691.7px;top:232.30px;transform:scaleX(0.8652);transform-origin:0 0">Dormant PVC 48 mm</div>
<div class="t g" style="left:1415.7px;width:90.9px;text-align:center;top:232.30px;transform:scaleX(0.9595);transform-origin:50% 0">12/10/2020</div>
<div class="t g" style="left:1510.1px;top:232.30px;transform:scaleX(0.8626);transform-origin:0 0">Un</div>
<div class="t g" style="left:1567.0px;width:97.9px;text-align:right;top:232.30px;transform:scaleX(0.8876);transform-origin:100% 0">0,000</div>
<div class="t g" style="left:1667.4px;width:78.4px;text-align:right;top:232.30px;transform:scaleX(0.8876);transform-origin:100% 0">1,000</div>
<div class="t g" style="left:1748.3px;width:78.0px;text-align:right;top:232.30px;transform:scaleX(0.8876);transform-origin:100% 0">1,000</div>
<div class="t g" style="left:1828.8px;width:78.0px;text-align:right;top:232.30px;transform:scaleX(0.8876);transform-origin:100% 0">0,000</div>
<div class="t g" style="left:1909.3px;width:91.0px;text-align:center;top:232.30px;transform:scaleX(0.9595);transform-origin:50% 0">09/10/2020</div>
<div class="t g" style="left:2003.8px;top:232.30px;transform:scaleX(0.8420);transform-origin:0 0">F</div>
<div class="t g" style="left:2044.9px;top:232.30px;transform:scaleX(0.8420);transform-origin:0 0">CDE</div>
<div class="t g" style="left:2085.7px;top:232.30px;transform:scaleX(0.8394);transform-origin:0 0">C201000001</div>
<div class="t g" style="left:2176.2px;top:232.30px;transform:scaleX(0.8391);transform-origin:0 0">01</div>
<div class="t g" style="left:2226.8px;top:232.30px;transform:scaleX(0.8842);transform-origin:0 0">P20410001+</div>
<div class="a" style="left:547px;top:268.65px;width:1767.3px;height:1px;border-top:1px dotted #c6c6c6"></div>
<div class="a" style="left:507px;top:268.65px;width:40px;height:1.5px;background:#a9bedb"></div>
<div class="t g" style="left:550.5px;top:252.18px;transform:scaleX(0.8420);transform-origin:0 0">C</div>
<div class="t g" style="left:581.0px;top:252.18px;transform:scaleX(0.8817);transform-origin:0 0">C201000001/03</div>
<div class="t g" style="left:691.7px;top:252.18px;transform:scaleX(0.8625);transform-origin:0 0">FENETRE-PVC</div>
<div class="t g" style="left:1415.7px;width:90.9px;text-align:center;top:252.18px;transform:scaleX(0.9595);transform-origin:50% 0">05/10/2020</div>
<div class="t g" style="left:1510.1px;top:252.18px;transform:scaleX(0.8626);transform-origin:0 0">Un</div>
<div class="t g" style="left:1567.0px;width:97.9px;text-align:right;top:252.18px;transform:scaleX(0.8876);transform-origin:100% 0">0,000</div>
<div class="t g" style="left:1667.4px;width:78.4px;text-align:right;top:252.18px;transform:scaleX(0.8876);transform-origin:100% 0">1,000</div>
<div class="t g" style="left:1748.3px;width:78.0px;text-align:right;top:252.18px;transform:scaleX(0.8876);transform-origin:100% 0">1,000</div>
<div class="t g" style="left:1828.8px;width:78.0px;text-align:right;top:252.18px;transform:scaleX(0.8876);transform-origin:100% 0">0,000</div>
<div class="t g" style="left:1909.3px;width:91.0px;text-align:center;top:252.18px;transform:scaleX(0.9595);transform-origin:50% 0">24/09/2020</div>
<div class="t g" style="left:2003.8px;top:252.18px;transform:scaleX(0.8420);transform-origin:0 0">F</div>
<div class="t g" style="left:2044.9px;top:252.18px;transform:scaleX(0.8420);transform-origin:0 0">CDE</div>
<div class="t g" style="left:2085.7px;top:252.18px;transform:scaleX(0.8394);transform-origin:0 0">C201000001</div>
<div class="t g" style="left:2176.2px;top:252.18px;transform:scaleX(0.8391);transform-origin:0 0">03</div>
<div class="t g" style="left:2226.8px;top:252.18px;transform:scaleX(0.8394);transform-origin:0 0">P20410001</div>
<div class="a" style="left:547px;top:269.65px;width:1767.3px;height:19.88px;background:#efefef"></div>
<div class="a" style="left:547px;top:288.53px;width:1767.3px;height:1px;border-top:1px dotted #c6c6c6"></div>
<div class="a" style="left:507px;top:288.53px;width:40px;height:1.5px;background:#a9bedb"></div>
<div class="t g" style="left:550.5px;top:272.05px;transform:scaleX(0.8420);transform-origin:0 0">C</div>
<div class="t g" style="left:581.0px;top:272.05px;transform:scaleX(0.8817);transform-origin:0 0">C201000002/02</div>
<div class="t g" style="left:691.7px;top:272.05px;transform:scaleX(0.8822);transform-origin:0 0">Ensemble</div>
<div class="t g" style="left:1415.7px;width:90.9px;text-align:center;top:272.05px;transform:scaleX(0.9595);transform-origin:50% 0">05/10/2020</div>
<div class="t g" style="left:1510.1px;top:272.05px;transform:scaleX(0.8626);transform-origin:0 0">Un</div>
<div class="t g" style="left:1567.0px;width:97.9px;text-align:right;top:272.05px;transform:scaleX(0.8876);transform-origin:100% 0">0,000</div>
<div class="t g" style="left:1667.4px;width:78.4px;text-align:right;top:272.05px;transform:scaleX(0.8876);transform-origin:100% 0">1,000</div>
<div class="t g" style="left:1748.3px;width:78.0px;text-align:right;top:272.05px;transform:scaleX(0.8876);transform-origin:100% 0">1,000</div>
<div class="t g" style="left:1828.8px;width:78.0px;text-align:right;top:272.05px;transform:scaleX(0.8876);transform-origin:100% 0">0,000</div>
<div class="t g" style="left:1909.3px;width:91.0px;text-align:center;top:272.05px;transform:scaleX(0.9595);transform-origin:50% 0">05/10/2020</div>
<div class="t g" style="left:2003.8px;top:272.05px;transform:scaleX(0.8420);transform-origin:0 0">F</div>
<div class="t g" style="left:2044.9px;top:272.05px;transform:scaleX(0.8420);transform-origin:0 0">CDE</div>
<div class="t g" style="left:2085.7px;top:272.05px;transform:scaleX(0.8394);transform-origin:0 0">C201000002</div>
<div class="t g" style="left:2176.2px;top:272.05px;transform:scaleX(0.8391);transform-origin:0 0">02</div>
<div class="t g" style="left:2226.8px;top:272.05px;transform:scaleX(0.8391);transform-origin:0 0">20410001</div>
<div class="a" style="left:547px;top:308.40px;width:1767.3px;height:1px;border-top:1px dotted #c6c6c6"></div>
<div class="a" style="left:507px;top:308.40px;width:40px;height:1.5px;background:#a9bedb"></div>
<div class="t g" style="left:550.5px;top:291.93px;transform:scaleX(0.8420);transform-origin:0 0">C</div>
<div class="t g" style="left:581.0px;top:291.93px;transform:scaleX(0.8817);transform-origin:0 0">C201000003/01</div>
<div class="t g" style="left:691.7px;top:291.93px;transform:scaleX(0.8652);transform-origin:0 0">Dormant PVC 48 mm</div>
<div class="t g" style="left:1388.2px;top:291.93px;transform:scaleX(0.8420);transform-origin:0 0">R</div>
<div class="t g" style="left:1415.7px;width:90.9px;text-align:center;top:291.93px;transform:scaleX(0.9595);transform-origin:50% 0">26/10/2020</div>
<div class="t g" style="left:1510.1px;top:291.93px;transform:scaleX(0.8626);transform-origin:0 0">Un</div>
<div class="t g" style="left:1567.0px;width:97.9px;text-align:right;top:291.93px;transform:scaleX(0.8876);transform-origin:100% 0">1,000</div>
<div class="t g" style="left:1667.4px;width:78.4px;text-align:right;top:291.93px;transform:scaleX(0.8876);transform-origin:100% 0">1,000</div>
<div class="t g" style="left:1748.3px;width:78.0px;text-align:right;top:291.93px;transform:scaleX(0.8876);transform-origin:100% 0">0,000</div>
<div class="t g" style="left:1828.8px;width:78.0px;text-align:right;top:291.93px;transform:scaleX(0.8876);transform-origin:100% 0">0,000</div>
<div class="t g" style="left:1909.3px;width:91.0px;text-align:center;top:291.93px;transform:scaleX(0.9595);transform-origin:50% 0">23/10/2020</div>
<div class="t g" style="left:2003.8px;top:291.93px;transform:scaleX(0.8420);transform-origin:0 0">F</div>
<div class="t g" style="left:2044.9px;top:291.93px;transform:scaleX(0.8420);transform-origin:0 0">CDE</div>
<div class="t g" style="left:2085.7px;top:291.93px;transform:scaleX(0.8394);transform-origin:0 0">C201000003</div>
<div class="t g" style="left:2176.2px;top:291.93px;transform:scaleX(0.8391);transform-origin:0 0">01</div>
<div class="a" style="left:547px;top:309.40px;width:1767.3px;height:19.88px;background:#efefef"></div>
<div class="a" style="left:547px;top:328.28px;width:1767.3px;height:1px;border-top:1px dotted #c6c6c6"></div>
<div class="a" style="left:507px;top:328.28px;width:40px;height:1.5px;background:#a9bedb"></div>
<div class="a" style="left:507px;top:309.90px;width:39px;height:18.38px;background:#bcc6d4"></div>
<div class="t g" style="left:550.5px;top:311.80px;transform:scaleX(0.8420);transform-origin:0 0">C</div>
<div class="t g" style="left:581.0px;top:311.80px;transform:scaleX(0.8817);transform-origin:0 0">C201000003/03</div>
<div class="t g" style="left:691.7px;top:311.80px;transform:scaleX(0.8625);transform-origin:0 0">FENETRE-PVC</div>
<div class="t g" style="left:1415.7px;width:90.9px;text-align:center;top:311.80px;transform:scaleX(0.9595);transform-origin:50% 0">19/10/2020</div>
<div class="t g" style="left:1510.1px;top:311.80px;transform:scaleX(0.8626);transform-origin:0 0">Un</div>
<div class="t g" style="left:1567.0px;width:97.9px;text-align:right;top:311.80px;transform:scaleX(0.8876);transform-origin:100% 0">0,000</div>
<div class="t g" style="left:1667.4px;width:78.4px;text-align:right;top:311.80px;transform:scaleX(0.8876);transform-origin:100% 0">1,000</div>
<div class="t g" style="left:1748.3px;width:78.0px;text-align:right;top:311.80px;transform:scaleX(0.8876);transform-origin:100% 0">1,000</div>
<div class="t g" style="left:1828.8px;width:78.0px;text-align:right;top:311.80px;transform:scaleX(0.8876);transform-origin:100% 0">0,000</div>
<div class="t g" style="left:1909.3px;width:91.0px;text-align:center;top:311.80px;transform:scaleX(0.9595);transform-origin:50% 0">08/10/2020</div>
<div class="t g" style="left:2003.8px;top:311.80px;transform:scaleX(0.8420);transform-origin:0 0">F</div>
<div class="t g" style="left:2044.9px;top:311.80px;transform:scaleX(0.8420);transform-origin:0 0">CDE</div>
<div class="t g" style="left:2085.7px;top:311.80px;transform:scaleX(0.8394);transform-origin:0 0">C201000003</div>
<div class="t g" style="left:2176.2px;top:311.80px;transform:scaleX(0.8391);transform-origin:0 0">03</div>
<div class="t g" style="left:2226.8px;top:311.80px;transform:scaleX(0.8391);transform-origin:0 0">20430001</div>
<div class="a" style="left:547px;top:348.16px;width:1767.3px;height:1px;border-top:1px dotted #c6c6c6"></div>
<div class="a" style="left:507px;top:348.16px;width:40px;height:1.5px;background:#a9bedb"></div>
<div class="t g" style="left:550.5px;top:331.68px;transform:scaleX(0.8420);transform-origin:0 0">C</div>
<div class="t g" style="left:581.0px;top:331.68px;transform:scaleX(0.8817);transform-origin:0 0">C201000004/01</div>
<div class="t g" style="left:691.7px;top:331.68px;transform:scaleX(0.8652);transform-origin:0 0">Dormant PVC 48 mm</div>
<div class="t g" style="left:1388.2px;top:331.68px;transform:scaleX(0.8420);transform-origin:0 0">R</div>
<div class="t g" style="left:1415.7px;width:90.9px;text-align:center;top:331.68px;transform:scaleX(0.9595);transform-origin:50% 0">26/10/2020</div>
<div class="t g" style="left:1510.1px;top:331.68px;transform:scaleX(0.8626);transform-origin:0 0">Un</div>
<div class="t g" style="left:1567.0px;width:97.9px;text-align:right;top:331.68px;transform:scaleX(0.8876);transform-origin:100% 0">1,000</div>
<div class="t g" style="left:1667.4px;width:78.4px;text-align:right;top:331.68px;transform:scaleX(0.8876);transform-origin:100% 0">1,000</div>
<div class="t g" style="left:1748.3px;width:78.0px;text-align:right;top:331.68px;transform:scaleX(0.8876);transform-origin:100% 0">0,000</div>
<div class="t g" style="left:1828.8px;width:78.0px;text-align:right;top:331.68px;transform:scaleX(0.8876);transform-origin:100% 0">0,000</div>
<div class="t g" style="left:1909.3px;width:91.0px;text-align:center;top:331.68px;transform:scaleX(0.9595);transform-origin:50% 0">23/10/2020</div>
<div class="t g" style="left:2003.8px;top:331.68px;transform:scaleX(0.8420);transform-origin:0 0">F</div>
<div class="t g" style="left:2044.9px;top:331.68px;transform:scaleX(0.8420);transform-origin:0 0">CDE</div>
<div class="t g" style="left:2085.7px;top:331.68px;transform:scaleX(0.8394);transform-origin:0 0">C201000004</div>
<div class="t g" style="left:2176.2px;top:331.68px;transform:scaleX(0.8391);transform-origin:0 0">01</div>
<div class="a" style="left:547px;top:349.16px;width:1767.3px;height:19.88px;background:#efefef"></div>
<div class="a" style="left:547px;top:368.03px;width:1767.3px;height:1px;border-top:1px dotted #c6c6c6"></div>
<div class="a" style="left:507px;top:368.03px;width:40px;height:1.5px;background:#a9bedb"></div>
<div class="t g" style="left:550.5px;top:351.56px;transform:scaleX(0.8420);transform-origin:0 0">C</div>
<div class="t g" style="left:581.0px;top:351.56px;transform:scaleX(0.8817);transform-origin:0 0">C201000004/03</div>
<div class="t g" style="left:691.7px;top:351.56px;transform:scaleX(0.8625);transform-origin:0 0">FENETRE-PVC</div>
<div class="t g" style="left:1388.2px;top:351.56px;transform:scaleX(0.8420);transform-origin:0 0">R</div>
<div class="t g" style="left:1415.7px;width:90.9px;text-align:center;top:351.56px;transform:scaleX(0.9595);transform-origin:50% 0">19/10/2020</div>
<div class="t g" style="left:1510.1px;top:351.56px;transform:scaleX(0.8626);transform-origin:0 0">Un</div>
<div class="t g" style="left:1567.0px;width:97.9px;text-align:right;top:351.56px;transform:scaleX(0.8876);transform-origin:100% 0">1,000</div>
<div class="t g" style="left:1667.4px;width:78.4px;text-align:right;top:351.56px;transform:scaleX(0.8876);transform-origin:100% 0">1,000</div>
<div class="t g" style="left:1748.3px;width:78.0px;text-align:right;top:351.56px;transform:scaleX(0.8876);transform-origin:100% 0">0,000</div>
<div class="t g" style="left:1828.8px;width:78.0px;text-align:right;top:351.56px;transform:scaleX(0.8876);transform-origin:100% 0">0,000</div>
<div class="t g" style="left:1909.3px;width:91.0px;text-align:center;top:351.56px;transform:scaleX(0.9595);transform-origin:50% 0">08/10/2020</div>
<div class="t g" style="left:2003.8px;top:351.56px;transform:scaleX(0.8420);transform-origin:0 0">F</div>
<div class="t g" style="left:2044.9px;top:351.56px;transform:scaleX(0.8420);transform-origin:0 0">CDE</div>
<div class="t g" style="left:2085.7px;top:351.56px;transform:scaleX(0.8394);transform-origin:0 0">C201000004</div>
<div class="t g" style="left:2176.2px;top:351.56px;transform:scaleX(0.8391);transform-origin:0 0">03</div>
<div class="a" style="left:547px;top:387.91px;width:1767.3px;height:1px;border-top:1px dotted #c6c6c6"></div>
<div class="a" style="left:507px;top:387.91px;width:40px;height:1.5px;background:#a9bedb"></div>
<div class="t g" style="left:550.5px;top:371.43px;transform:scaleX(0.8420);transform-origin:0 0">C</div>
<div class="t g" style="left:581.0px;top:371.43px;transform:scaleX(0.8817);transform-origin:0 0">C201000004/04</div>
<div class="t g" style="left:691.7px;top:371.43px;transform:scaleX(0.8828);transform-origin:0 0">Article extrudé laqué</div>
<div class="t g" style="left:1388.2px;top:371.43px;transform:scaleX(0.8420);transform-origin:0 0">R</div>
<div class="t g" style="left:1415.7px;width:90.9px;text-align:center;top:371.43px;transform:scaleX(0.9595);transform-origin:50% 0">19/10/2020</div>
<div class="t g" style="left:1510.1px;top:371.43px;transform:scaleX(0.8420);transform-origin:0 0">BARRE</div>
<div class="t g" style="left:1567.0px;width:97.9px;text-align:right;top:371.43px;transform:scaleX(0.8876);transform-origin:100% 0">1,000</div>
<div class="t g" style="left:1667.4px;width:78.4px;text-align:right;top:371.43px;transform:scaleX(0.8876);transform-origin:100% 0">1,000</div>
<div class="t g" style="left:1748.3px;width:78.0px;text-align:right;top:371.43px;transform:scaleX(0.8876);transform-origin:100% 0">0,000</div>
<div class="t g" style="left:1828.8px;width:78.0px;text-align:right;top:371.43px;transform:scaleX(0.8876);transform-origin:100% 0">0,000</div>
<div class="t g" style="left:1909.3px;width:91.0px;text-align:center;top:371.43px;transform:scaleX(0.9595);transform-origin:50% 0">19/10/2020</div>
<div class="t g" style="left:2003.8px;top:371.43px;transform:scaleX(0.8420);transform-origin:0 0">F</div>
<div class="t g" style="left:2044.9px;top:371.43px;transform:scaleX(0.8420);transform-origin:0 0">CDE</div>
<div class="t g" style="left:2085.7px;top:371.43px;transform:scaleX(0.8394);transform-origin:0 0">C201000004</div>
<div class="t g" style="left:2176.2px;top:371.43px;transform:scaleX(0.8391);transform-origin:0 0">04</div>
<div class="a" style="left:547px;top:388.91px;width:1767.3px;height:19.88px;background:#efefef"></div>
<div class="a" style="left:547px;top:407.78px;width:1767.3px;height:1px;border-top:1px dotted #c6c6c6"></div>
<div class="a" style="left:507px;top:407.78px;width:40px;height:1.5px;background:#a9bedb"></div>
<div class="t g" style="left:550.5px;top:391.31px;transform:scaleX(0.8420);transform-origin:0 0">C</div>
<div class="t g" style="left:581.0px;top:391.31px;transform:scaleX(0.8817);transform-origin:0 0">C201000006/01</div>
<div class="t g" style="left:691.7px;top:391.31px;transform:scaleX(0.8625);transform-origin:0 0">FENETRE-PVC</div>
<div class="t g" style="left:1388.2px;top:391.31px;transform:scaleX(0.8420);transform-origin:0 0">R</div>
<div class="t g" style="left:1415.7px;width:90.9px;text-align:center;top:391.31px;transform:scaleX(0.9595);transform-origin:50% 0">19/10/2020</div>
<div class="t g" style="left:1510.1px;top:391.31px;transform:scaleX(0.8626);transform-origin:0 0">Un</div>
<div class="t g" style="left:1567.0px;width:97.9px;text-align:right;top:391.31px;transform:scaleX(0.8876);transform-origin:100% 0">1,000</div>
<div class="t g" style="left:1667.4px;width:78.4px;text-align:right;top:391.31px;transform:scaleX(0.8876);transform-origin:100% 0">1,000</div>
<div class="t g" style="left:1748.3px;width:78.0px;text-align:right;top:391.31px;transform:scaleX(0.8876);transform-origin:100% 0">0,000</div>
<div class="t g" style="left:1828.8px;width:78.0px;text-align:right;top:391.31px;transform:scaleX(0.8876);transform-origin:100% 0">0,000</div>
<div class="t g" style="left:1909.3px;width:91.0px;text-align:center;top:391.31px;transform:scaleX(0.9595);transform-origin:50% 0">08/10/2020</div>
<div class="t g" style="left:2003.8px;top:391.31px;transform:scaleX(0.8420);transform-origin:0 0">F</div>
<div class="t g" style="left:2044.9px;top:391.31px;transform:scaleX(0.8420);transform-origin:0 0">CDE</div>
<div class="t g" style="left:2085.7px;top:391.31px;transform:scaleX(0.8394);transform-origin:0 0">C201000006</div>
<div class="t g" style="left:2176.2px;top:391.31px;transform:scaleX(0.8391);transform-origin:0 0">01</div>
<div class="a" style="left:547px;top:427.66px;width:1767.3px;height:1px;border-top:1px dotted #c6c6c6"></div>
<div class="a" style="left:507px;top:427.66px;width:40px;height:1.5px;background:#a9bedb"></div>
<div class="t g" style="left:550.5px;top:411.18px;transform:scaleX(0.8420);transform-origin:0 0">C</div>
<div class="t g" style="left:581.0px;top:411.18px;transform:scaleX(0.8817);transform-origin:0 0">C201000006/03</div>
<div class="t g" style="left:691.7px;top:411.18px;transform:scaleX(0.8828);transform-origin:0 0">Article extrudé laqué</div>
<div class="t g" style="left:1388.2px;top:411.18px;transform:scaleX(0.8420);transform-origin:0 0">R</div>
<div class="t g" style="left:1415.7px;width:90.9px;text-align:center;top:411.18px;transform:scaleX(0.9595);transform-origin:50% 0">19/10/2020</div>
<div class="t g" style="left:1510.1px;top:411.18px;transform:scaleX(0.8420);transform-origin:0 0">BARRE</div>
<div class="t g" style="left:1567.0px;width:97.9px;text-align:right;top:411.18px;transform:scaleX(0.8876);transform-origin:100% 0">1,000</div>
<div class="t g" style="left:1667.4px;width:78.4px;text-align:right;top:411.18px;transform:scaleX(0.8876);transform-origin:100% 0">1,000</div>
<div class="t g" style="left:1748.3px;width:78.0px;text-align:right;top:411.18px;transform:scaleX(0.8876);transform-origin:100% 0">0,000</div>
<div class="t g" style="left:1828.8px;width:78.0px;text-align:right;top:411.18px;transform:scaleX(0.8876);transform-origin:100% 0">0,000</div>
<div class="t g" style="left:1909.3px;width:91.0px;text-align:center;top:411.18px;transform:scaleX(0.9595);transform-origin:50% 0">19/10/2020</div>
<div class="t g" style="left:2003.8px;top:411.18px;transform:scaleX(0.8420);transform-origin:0 0">F</div>
<div class="t g" style="left:2044.9px;top:411.18px;transform:scaleX(0.8420);transform-origin:0 0">CDE</div>
<div class="t g" style="left:2085.7px;top:411.18px;transform:scaleX(0.8394);transform-origin:0 0">C201000006</div>
<div class="t g" style="left:2176.2px;top:411.18px;transform:scaleX(0.8391);transform-origin:0 0">03</div>
<div class="a" style="left:547px;top:428.66px;width:1767.3px;height:19.88px;background:#efefef"></div>
<div class="a" style="left:547px;top:447.54px;width:1767.3px;height:1px;border-top:1px dotted #c6c6c6"></div>
<div class="a" style="left:507px;top:447.54px;width:40px;height:1.5px;background:#a9bedb"></div>
<div class="t g" style="left:550.5px;top:431.06px;transform:scaleX(0.8420);transform-origin:0 0">C</div>
<div class="t g" style="left:581.0px;top:431.06px;transform:scaleX(0.8817);transform-origin:0 0">C201000008/01</div>
<div class="t g" style="left:691.7px;top:431.06px;transform:scaleX(0.8822);transform-origin:0 0">Ensemble</div>
<div class="t g" style="left:1388.2px;top:431.06px;transform:scaleX(0.8420);transform-origin:0 0">R</div>
<div class="t g" style="left:1415.7px;width:90.9px;text-align:center;top:431.06px;transform:scaleX(0.9595);transform-origin:50% 0">27/10/2020</div>
<div class="t g" style="left:1510.1px;top:431.06px;transform:scaleX(0.8626);transform-origin:0 0">Un</div>
<div class="t g" style="left:1567.0px;width:97.9px;text-align:right;top:431.06px;transform:scaleX(0.8876);transform-origin:100% 0">5,000</div>
<div class="t g" style="left:1667.4px;width:78.4px;text-align:right;top:431.06px;transform:scaleX(0.8876);transform-origin:100% 0">5,000</div>
<div class="t g" style="left:1748.3px;width:78.0px;text-align:right;top:431.06px;transform:scaleX(0.8876);transform-origin:100% 0">0,000</div>
<div class="t g" style="left:1828.8px;width:78.0px;text-align:right;top:431.06px;transform:scaleX(0.8876);transform-origin:100% 0">0,000</div>
<div class="t g" style="left:1909.3px;width:91.0px;text-align:center;top:431.06px;transform:scaleX(0.9595);transform-origin:50% 0">27/10/2020</div>
<div class="t g" style="left:2003.8px;top:431.06px;transform:scaleX(0.8420);transform-origin:0 0">F</div>
<div class="t g" style="left:2044.9px;top:431.06px;transform:scaleX(0.8420);transform-origin:0 0">CDE</div>
<div class="t g" style="left:2085.7px;top:431.06px;transform:scaleX(0.8394);transform-origin:0 0">C201000008</div>
<div class="t g" style="left:2176.2px;top:431.06px;transform:scaleX(0.8391);transform-origin:0 0">01</div>
<div class="a" style="left:547px;top:467.41px;width:1767.3px;height:1px;border-top:1px dotted #c6c6c6"></div>
<div class="a" style="left:507px;top:467.41px;width:40px;height:1.5px;background:#a9bedb"></div>
<div class="t g" style="left:550.5px;top:450.94px;transform:scaleX(0.8420);transform-origin:0 0">C</div>
<div class="t g" style="left:581.0px;top:450.94px;transform:scaleX(0.8817);transform-origin:0 0">C201000009/01</div>
<div class="t g" style="left:691.7px;top:450.94px;transform:scaleX(0.8822);transform-origin:0 0">Ensemble</div>
<div class="t g" style="left:1388.2px;top:450.94px;transform:scaleX(0.8420);transform-origin:0 0">R</div>
<div class="t g" style="left:1415.7px;width:90.9px;text-align:center;top:450.94px;transform:scaleX(0.9595);transform-origin:50% 0">27/10/2020</div>
<div class="t g" style="left:1510.1px;top:450.94px;transform:scaleX(0.8626);transform-origin:0 0">Un</div>
<div class="t g" style="left:1567.0px;width:97.9px;text-align:right;top:450.94px;transform:scaleX(0.8876);transform-origin:100% 0">4,000</div>
<div class="t g" style="left:1667.4px;width:78.4px;text-align:right;top:450.94px;transform:scaleX(0.8876);transform-origin:100% 0">5,000</div>
<div class="t g" style="left:1748.3px;width:78.0px;text-align:right;top:450.94px;transform:scaleX(0.8876);transform-origin:100% 0">1,000</div>
<div class="t g" style="left:1828.8px;width:78.0px;text-align:right;top:450.94px;transform:scaleX(0.8876);transform-origin:100% 0">0,000</div>
<div class="t g" style="left:1909.3px;width:91.0px;text-align:center;top:450.94px;transform:scaleX(0.9595);transform-origin:50% 0">27/10/2020</div>
<div class="t g" style="left:2003.8px;top:450.94px;transform:scaleX(0.8420);transform-origin:0 0">F</div>
<div class="t g" style="left:2044.9px;top:450.94px;transform:scaleX(0.8420);transform-origin:0 0">CDE</div>
<div class="t g" style="left:2085.7px;top:450.94px;transform:scaleX(0.8394);transform-origin:0 0">C201000009</div>
<div class="t g" style="left:2176.2px;top:450.94px;transform:scaleX(0.8391);transform-origin:0 0">01</div>
<div class="t g" style="left:2226.8px;top:450.94px;transform:scaleX(0.8898);transform-origin:0 0">20440003+</div>
<div class="a" style="left:547px;top:468.41px;width:1767.3px;height:19.88px;background:#efefef"></div>
<div class="a" style="left:547px;top:487.29px;width:1767.3px;height:1px;border-top:1px dotted #c6c6c6"></div>
<div class="a" style="left:507px;top:487.29px;width:40px;height:1.5px;background:#a9bedb"></div>
<div class="t g" style="left:550.5px;top:470.81px;transform:scaleX(0.8420);transform-origin:0 0">C</div>
<div class="t g" style="left:581.0px;top:470.81px;transform:scaleX(0.8817);transform-origin:0 0">C201000010/01</div>
<div class="t g" style="left:691.7px;top:470.81px;transform:scaleX(0.8822);transform-origin:0 0">Ensemble</div>
<div class="t g" style="left:1388.2px;top:470.81px;transform:scaleX(0.8420);transform-origin:0 0">R</div>
<div class="t g" style="left:1415.7px;width:90.9px;text-align:center;top:470.81px;transform:scaleX(0.9595);transform-origin:50% 0">27/10/2020</div>
<div class="t g" style="left:1510.1px;top:470.81px;transform:scaleX(0.8626);transform-origin:0 0">Un</div>
<div class="t g" style="left:1567.0px;width:97.9px;text-align:right;top:470.81px;transform:scaleX(0.8876);transform-origin:100% 0">5,000</div>
<div class="t g" style="left:1667.4px;width:78.4px;text-align:right;top:470.81px;transform:scaleX(0.8876);transform-origin:100% 0">5,000</div>
<div class="t g" style="left:1748.3px;width:78.0px;text-align:right;top:470.81px;transform:scaleX(0.8876);transform-origin:100% 0">0,000</div>
<div class="t g" style="left:1828.8px;width:78.0px;text-align:right;top:470.81px;transform:scaleX(0.8876);transform-origin:100% 0">0,000</div>
<div class="t g" style="left:1909.3px;width:91.0px;text-align:center;top:470.81px;transform:scaleX(0.9595);transform-origin:50% 0">27/10/2020</div>
<div class="t g" style="left:2003.8px;top:470.81px;transform:scaleX(0.8420);transform-origin:0 0">F</div>
<div class="t g" style="left:2044.9px;top:470.81px;transform:scaleX(0.8420);transform-origin:0 0">CDE</div>
<div class="t g" style="left:2085.7px;top:470.81px;transform:scaleX(0.8394);transform-origin:0 0">C201000010</div>
<div class="t g" style="left:2176.2px;top:470.81px;transform:scaleX(0.8391);transform-origin:0 0">01</div>
<div class="a" style="left:547px;top:507.16px;width:1767.3px;height:1px;border-top:1px dotted #c6c6c6"></div>
<div class="a" style="left:507px;top:507.16px;width:40px;height:1.5px;background:#a9bedb"></div>
<div class="t g" style="left:550.5px;top:490.69px;transform:scaleX(0.8420);transform-origin:0 0">C</div>
<div class="t g" style="left:581.0px;top:490.69px;transform:scaleX(0.8910);transform-origin:0 0">C201000011/01</div>
<div class="t g" style="left:691.7px;top:490.69px;transform:scaleX(0.8625);transform-origin:0 0">FENETRE-PVC</div>
<div class="t g" style="left:1388.2px;top:490.69px;transform:scaleX(0.8420);transform-origin:0 0">R</div>
<div class="t g" style="left:1415.7px;width:90.9px;text-align:center;top:490.69px;transform:scaleX(0.9595);transform-origin:50% 0">26/10/2020</div>
<div class="t g" style="left:1510.1px;top:490.69px;transform:scaleX(0.8626);transform-origin:0 0">Un</div>
<div class="t g" style="left:1567.0px;width:97.9px;text-align:right;top:490.69px;transform:scaleX(0.8876);transform-origin:100% 0">1,000</div>
<div class="t g" style="left:1667.4px;width:78.4px;text-align:right;top:490.69px;transform:scaleX(0.8876);transform-origin:100% 0">1,000</div>
<div class="t g" style="left:1748.3px;width:78.0px;text-align:right;top:490.69px;transform:scaleX(0.8876);transform-origin:100% 0">0,000</div>
<div class="t g" style="left:1828.8px;width:78.0px;text-align:right;top:490.69px;transform:scaleX(0.8876);transform-origin:100% 0">0,000</div>
<div class="t g" style="left:1909.3px;width:91.0px;text-align:center;top:490.69px;transform:scaleX(0.9595);transform-origin:50% 0">15/10/2020</div>
<div class="t g" style="left:2003.8px;top:490.69px;transform:scaleX(0.8420);transform-origin:0 0">F</div>
<div class="t g" style="left:2044.9px;top:490.69px;transform:scaleX(0.8420);transform-origin:0 0">CDE</div>
<div class="t g" style="left:2085.7px;top:490.69px;transform:scaleX(0.8504);transform-origin:0 0">C201000011</div>
<div class="t g" style="left:2176.2px;top:490.69px;transform:scaleX(0.8391);transform-origin:0 0">01</div>
<div class="a" style="left:547px;top:508.16px;width:1767.3px;height:19.88px;background:#efefef"></div>
<div class="a" style="left:547px;top:527.04px;width:1767.3px;height:1px;border-top:1px dotted #c6c6c6"></div>
<div class="a" style="left:507px;top:527.04px;width:40px;height:1.5px;background:#a9bedb"></div>
<div class="t g" style="left:550.5px;top:510.56px;transform:scaleX(0.8420);transform-origin:0 0">C</div>
<div class="t g" style="left:581.0px;top:510.56px;transform:scaleX(0.8817);transform-origin:0 0">C201000012/01</div>
<div class="t g" style="left:691.7px;top:510.56px;transform:scaleX(0.8822);transform-origin:0 0">Ensemble</div>
<div class="t g" style="left:1388.2px;top:510.56px;transform:scaleX(0.8420);transform-origin:0 0">R</div>
<div class="t g" style="left:1415.7px;width:90.9px;text-align:center;top:510.56px;transform:scaleX(0.9739);transform-origin:50% 0">21/11/2020</div>
<div class="t g" style="left:1510.1px;top:510.56px;transform:scaleX(0.8626);transform-origin:0 0">Un</div>
<div class="t g" style="left:1567.0px;width:97.9px;text-align:right;top:510.56px;transform:scaleX(0.8876);transform-origin:100% 0">1,000</div>
<div class="t g" style="left:1667.4px;width:78.4px;text-align:right;top:510.56px;transform:scaleX(0.8876);transform-origin:100% 0">1,000</div>
<div class="t g" style="left:1748.3px;width:78.0px;text-align:right;top:510.56px;transform:scaleX(0.8876);transform-origin:100% 0">0,000</div>
<div class="t g" style="left:1828.8px;width:78.0px;text-align:right;top:510.56px;transform:scaleX(0.8876);transform-origin:100% 0">0,000</div>
<div class="t g" style="left:1909.3px;width:91.0px;text-align:center;top:510.56px;transform:scaleX(0.9739);transform-origin:50% 0">20/11/2020</div>
<div class="t g" style="left:2003.8px;top:510.56px;transform:scaleX(0.8420);transform-origin:0 0">F</div>
<div class="t g" style="left:2044.9px;top:510.56px;transform:scaleX(0.8420);transform-origin:0 0">CDE</div>
<div class="t g" style="left:2085.7px;top:510.56px;transform:scaleX(0.8394);transform-origin:0 0">C201000012</div>
<div class="t g" style="left:2176.2px;top:510.56px;transform:scaleX(0.8391);transform-origin:0 0">01</div>
<div class="a" style="left:547px;top:546.92px;width:1767.3px;height:1px;border-top:1px dotted #c6c6c6"></div>
<div class="a" style="left:507px;top:546.92px;width:40px;height:1.5px;background:#a9bedb"></div>
<div class="t g" style="left:550.5px;top:530.44px;transform:scaleX(0.8420);transform-origin:0 0">C</div>
<div class="t g" style="left:581.0px;top:530.44px;transform:scaleX(0.8817);transform-origin:0 0">C201000013/03</div>
<div class="t g" style="left:691.7px;top:530.44px;transform:scaleX(0.8828);transform-origin:0 0">Article extrudé laqué</div>
<div class="t g" style="left:1415.7px;width:90.9px;text-align:center;top:530.44px;transform:scaleX(0.9739);transform-origin:50% 0">02/11/2020</div>
<div class="t g" style="left:1510.1px;top:530.44px;transform:scaleX(0.8420);transform-origin:0 0">BARRE</div>
<div class="t g" style="left:1567.0px;width:97.9px;text-align:right;top:530.44px;transform:scaleX(0.8876);transform-origin:100% 0">0,000</div>
<div class="t g" style="left:1667.4px;width:78.4px;text-align:right;top:530.44px;transform:scaleX(0.8876);transform-origin:100% 0">1,000</div>
<div class="t g" style="left:1748.3px;width:78.0px;text-align:right;top:530.44px;transform:scaleX(0.8876);transform-origin:100% 0">1,000</div>
<div class="t g" style="left:1828.8px;width:78.0px;text-align:right;top:530.44px;transform:scaleX(0.8876);transform-origin:100% 0">0,000</div>
<div class="t g" style="left:1909.3px;width:91.0px;text-align:center;top:530.44px;transform:scaleX(0.9739);transform-origin:50% 0">02/11/2020</div>
<div class="t g" style="left:2003.8px;top:530.44px;transform:scaleX(0.8420);transform-origin:0 0">F</div>
<div class="t g" style="left:2044.9px;top:530.44px;transform:scaleX(0.8420);transform-origin:0 0">CDE</div>
<div class="t g" style="left:2085.7px;top:530.44px;transform:scaleX(0.8394);transform-origin:0 0">C201000013</div>
<div class="t g" style="left:2176.2px;top:530.44px;transform:scaleX(0.8391);transform-origin:0 0">03</div>
<div class="t g" style="left:2226.8px;top:530.44px;transform:scaleX(0.8898);transform-origin:0 0">20440002+</div>
<div class="a" style="left:547px;top:547.92px;width:1767.3px;height:19.88px;background:#efefef"></div>
<div class="a" style="left:547px;top:566.79px;width:1767.3px;height:1px;border-top:1px dotted #c6c6c6"></div>
<div class="a" style="left:507px;top:566.79px;width:40px;height:1.5px;background:#a9bedb"></div>
<div class="t g" style="left:550.5px;top:550.32px;transform:scaleX(0.8420);transform-origin:0 0">C</div>
<div class="t g" style="left:581.0px;top:550.32px;transform:scaleX(0.8817);transform-origin:0 0">C201000014/01</div>
<div class="t g" style="left:691.7px;top:550.32px;transform:scaleX(0.8625);transform-origin:0 0">FENETRE-PVC</div>
<div class="t g" style="left:1415.7px;width:90.9px;text-align:center;top:550.32px;transform:scaleX(0.9739);transform-origin:50% 0">02/11/2020</div>
<div class="t g" style="left:1510.1px;top:550.32px;transform:scaleX(0.8626);transform-origin:0 0">Un</div>
<div class="t g" style="left:1567.0px;width:97.9px;text-align:right;top:550.32px;transform:scaleX(0.8876);transform-origin:100% 0">0,000</div>
<div class="t g" style="left:1667.4px;width:78.4px;text-align:right;top:550.32px;transform:scaleX(0.8876);transform-origin:100% 0">1,000</div>
<div class="t g" style="left:1748.3px;width:78.0px;text-align:right;top:550.32px;transform:scaleX(0.8876);transform-origin:100% 0">1,000</div>
<div class="t g" style="left:1828.8px;width:78.0px;text-align:right;top:550.32px;transform:scaleX(0.8876);transform-origin:100% 0">0,000</div>
<div class="t g" style="left:1909.3px;width:91.0px;text-align:center;top:550.32px;transform:scaleX(0.9595);transform-origin:50% 0">22/10/2020</div>
<div class="t g" style="left:2003.8px;top:550.32px;transform:scaleX(0.8420);transform-origin:0 0">F</div>
<div class="t g" style="left:2044.9px;top:550.32px;transform:scaleX(0.8420);transform-origin:0 0">CDE</div>
<div class="t g" style="left:2085.7px;top:550.32px;transform:scaleX(0.8394);transform-origin:0 0">C201000014</div>
<div class="t g" style="left:2176.2px;top:550.32px;transform:scaleX(0.8391);transform-origin:0 0">01</div>
<div class="t g" style="left:2226.8px;top:550.32px;transform:scaleX(0.8394);transform-origin:0 0">P20450001</div>
<div class="a" style="left:547px;top:586.67px;width:1767.3px;height:1px;border-top:1px dotted #c6c6c6"></div>
<div class="a" style="left:507px;top:586.67px;width:40px;height:1.5px;background:#a9bedb"></div>
<div class="t g" style="left:550.5px;top:570.19px;transform:scaleX(0.8420);transform-origin:0 0">C</div>
<div class="t g" style="left:581.0px;top:570.19px;transform:scaleX(0.8910);transform-origin:0 0">C201100012/02</div>
<div class="t g" style="left:691.7px;top:570.19px;transform:scaleX(0.8828);transform-origin:0 0">Article extrudé laqué</div>
<div class="t g" style="left:1388.2px;top:570.19px;transform:scaleX(0.8420);transform-origin:0 0">R</div>
<div class="t g" style="left:1415.7px;width:90.9px;text-align:center;top:570.19px;transform:scaleX(0.9739);transform-origin:50% 0">24/11/2020</div>
<div class="t g" style="left:1510.1px;top:570.19px;transform:scaleX(0.8420);transform-origin:0 0">BARRE</div>
<div class="t g" style="left:1567.0px;width:97.9px;text-align:right;top:570.19px;transform:scaleX(0.8876);transform-origin:100% 0">1,000</div>
<div class="t g" style="left:1667.4px;width:78.4px;text-align:right;top:570.19px;transform:scaleX(0.8876);transform-origin:100% 0">1,000</div>
<div class="t g" style="left:1748.3px;width:78.0px;text-align:right;top:570.19px;transform:scaleX(0.8876);transform-origin:100% 0">0,000</div>
<div class="t g" style="left:1828.8px;width:78.0px;text-align:right;top:570.19px;transform:scaleX(0.8876);transform-origin:100% 0">0,000</div>
<div class="t g" style="left:1909.3px;width:91.0px;text-align:center;top:570.19px;transform:scaleX(0.9739);transform-origin:50% 0">24/11/2020</div>
<div class="t g" style="left:2003.8px;top:570.19px;transform:scaleX(0.8420);transform-origin:0 0">F</div>
<div class="t g" style="left:2044.9px;top:570.19px;transform:scaleX(0.8420);transform-origin:0 0">CDE</div>
<div class="t g" style="left:2085.7px;top:570.19px;transform:scaleX(0.8504);transform-origin:0 0">C201100012</div>
<div class="t g" style="left:2176.2px;top:570.19px;transform:scaleX(0.8391);transform-origin:0 0">02</div>
<div class="a" style="left:547px;top:587.67px;width:1767.3px;height:19.88px;background:#efefef"></div>
<div class="a" style="left:547px;top:606.54px;width:1767.3px;height:1px;border-top:1px dotted #c6c6c6"></div>
<div class="a" style="left:507px;top:606.54px;width:40px;height:1.5px;background:#a9bedb"></div>
<div class="t g" style="left:550.5px;top:590.07px;transform:scaleX(0.8420);transform-origin:0 0">C</div>
<div class="t g" style="left:581.0px;top:590.07px;transform:scaleX(0.8910);transform-origin:0 0">C201100012/03</div>
<div class="t g" style="left:691.7px;top:590.07px;transform:scaleX(0.8822);transform-origin:0 0">Ensemble</div>
<div class="t g" style="left:1388.2px;top:590.07px;transform:scaleX(0.8420);transform-origin:0 0">R</div>
<div class="t g" style="left:1415.7px;width:90.9px;text-align:center;top:590.07px;transform:scaleX(0.9739);transform-origin:50% 0">24/11/2020</div>
<div class="t g" style="left:1510.1px;top:590.07px;transform:scaleX(0.8626);transform-origin:0 0">Un</div>
<div class="t g" style="left:1567.0px;width:97.9px;text-align:right;top:590.07px;transform:scaleX(0.8876);transform-origin:100% 0">1,000</div>
<div class="t g" style="left:1667.4px;width:78.4px;text-align:right;top:590.07px;transform:scaleX(0.8876);transform-origin:100% 0">1,000</div>
<div class="t g" style="left:1748.3px;width:78.0px;text-align:right;top:590.07px;transform:scaleX(0.8876);transform-origin:100% 0">0,000</div>
<div class="t g" style="left:1828.8px;width:78.0px;text-align:right;top:590.07px;transform:scaleX(0.8876);transform-origin:100% 0">0,000</div>
<div class="t g" style="left:1909.3px;width:91.0px;text-align:center;top:590.07px;transform:scaleX(0.9739);transform-origin:50% 0">24/11/2020</div>
<div class="t g" style="left:2003.8px;top:590.07px;transform:scaleX(0.8420);transform-origin:0 0">F</div>
<div class="t g" style="left:2044.9px;top:590.07px;transform:scaleX(0.8420);transform-origin:0 0">CDE</div>
<div class="t g" style="left:2085.7px;top:590.07px;transform:scaleX(0.8504);transform-origin:0 0">C201100012</div>
<div class="t g" style="left:2176.2px;top:590.07px;transform:scaleX(0.8391);transform-origin:0 0">03</div>
<div class="a" style="left:547px;top:626.42px;width:1767.3px;height:1px;border-top:1px dotted #c6c6c6"></div>
<div class="a" style="left:507px;top:626.42px;width:40px;height:1.5px;background:#a9bedb"></div>
<div class="t g" style="left:550.5px;top:609.94px;transform:scaleX(0.8420);transform-origin:0 0">C</div>
<div class="t g" style="left:581.0px;top:609.94px;transform:scaleX(0.8817);transform-origin:0 0">C201200002/01</div>
<div class="t g" style="left:691.7px;top:609.94px;transform:scaleX(0.8822);transform-origin:0 0">Ensemble</div>
<div class="t g" style="left:1388.2px;top:609.94px;transform:scaleX(0.8420);transform-origin:0 0">R</div>
<div class="t g" style="left:1415.7px;width:90.9px;text-align:center;top:609.94px;transform:scaleX(0.9595);transform-origin:50% 0">16/01/2021</div>
<div class="t g" style="left:1510.1px;top:609.94px;transform:scaleX(0.8626);transform-origin:0 0">Un</div>
<div class="t g" style="left:1567.0px;width:97.9px;text-align:right;top:609.94px;transform:scaleX(0.8876);transform-origin:100% 0">1,000</div>
<div class="t g" style="left:1667.4px;width:78.4px;text-align:right;top:609.94px;transform:scaleX(0.8876);transform-origin:100% 0">1,000</div>
<div class="t g" style="left:1748.3px;width:78.0px;text-align:right;top:609.94px;transform:scaleX(0.8876);transform-origin:100% 0">0,000</div>
<div class="t g" style="left:1828.8px;width:78.0px;text-align:right;top:609.94px;transform:scaleX(0.8876);transform-origin:100% 0">0,000</div>
<div class="t g" style="left:1909.3px;width:91.0px;text-align:center;top:609.94px;transform:scaleX(0.9595);transform-origin:50% 0">15/01/2021</div>
<div class="t g" style="left:2003.8px;top:609.94px;transform:scaleX(0.8420);transform-origin:0 0">F</div>
<div class="t g" style="left:2044.9px;top:609.94px;transform:scaleX(0.8420);transform-origin:0 0">CDE</div>
<div class="t g" style="left:2085.7px;top:609.94px;transform:scaleX(0.8394);transform-origin:0 0">C201200002</div>
<div class="t g" style="left:2176.2px;top:609.94px;transform:scaleX(0.8391);transform-origin:0 0">01</div>
<div class="a" style="left:547px;top:627.42px;width:1767.3px;height:19.88px;background:#efefef"></div>
<div class="a" style="left:547px;top:646.30px;width:1767.3px;height:1px;border-top:1px dotted #c6c6c6"></div>
<div class="a" style="left:507px;top:646.30px;width:40px;height:1.5px;background:#a9bedb"></div>
<div class="t g" style="left:550.5px;top:629.82px;transform:scaleX(0.8420);transform-origin:0 0">C</div>
<div class="t g" style="left:581.0px;top:629.82px;transform:scaleX(0.8817);transform-origin:0 0">C201200002/02</div>
<div class="t g" style="left:691.7px;top:629.82px;transform:scaleX(0.8822);transform-origin:0 0">Ensemble</div>
<div class="t g" style="left:1388.2px;top:629.82px;transform:scaleX(0.8420);transform-origin:0 0">R</div>
<div class="t g" style="left:1415.7px;width:90.9px;text-align:center;top:629.82px;transform:scaleX(0.9595);transform-origin:50% 0">16/01/2021</div>
<div class="t g" style="left:1510.1px;top:629.82px;transform:scaleX(0.8626);transform-origin:0 0">Un</div>
<div class="t g" style="left:1567.0px;width:97.9px;text-align:right;top:629.82px;transform:scaleX(0.8876);transform-origin:100% 0">1,000</div>
<div class="t g" style="left:1667.4px;width:78.4px;text-align:right;top:629.82px;transform:scaleX(0.8876);transform-origin:100% 0">1,000</div>
<div class="t g" style="left:1748.3px;width:78.0px;text-align:right;top:629.82px;transform:scaleX(0.8876);transform-origin:100% 0">0,000</div>
<div class="t g" style="left:1828.8px;width:78.0px;text-align:right;top:629.82px;transform:scaleX(0.8876);transform-origin:100% 0">0,000</div>
<div class="t g" style="left:1909.3px;width:91.0px;text-align:center;top:629.82px;transform:scaleX(0.9595);transform-origin:50% 0">15/01/2021</div>
<div class="t g" style="left:2003.8px;top:629.82px;transform:scaleX(0.8420);transform-origin:0 0">F</div>
<div class="t g" style="left:2044.9px;top:629.82px;transform:scaleX(0.8420);transform-origin:0 0">CDE</div>
<div class="t g" style="left:2085.7px;top:629.82px;transform:scaleX(0.8394);transform-origin:0 0">C201200002</div>
<div class="t g" style="left:2176.2px;top:629.82px;transform:scaleX(0.8391);transform-origin:0 0">02</div>
<div class="a" style="left:547px;top:666.17px;width:1767.3px;height:1px;border-top:1px dotted #c6c6c6"></div>
<div class="a" style="left:507px;top:666.17px;width:40px;height:1.5px;background:#a9bedb"></div>
<div class="t g" style="left:550.5px;top:649.70px;transform:scaleX(0.8420);transform-origin:0 0">C</div>
<div class="t g" style="left:581.0px;top:649.70px;transform:scaleX(0.8817);transform-origin:0 0">C210200001/01</div>
<div class="t g" style="left:691.7px;top:649.70px;transform:scaleX(0.8822);transform-origin:0 0">Ensemble</div>
<div class="t g" style="left:1415.7px;width:90.9px;text-align:center;top:649.70px;transform:scaleX(0.9595);transform-origin:50% 0">05/02/2021</div>
<div class="t g" style="left:1510.1px;top:649.70px;transform:scaleX(0.8626);transform-origin:0 0">Un</div>
<div class="t g" style="left:1567.0px;width:97.9px;text-align:right;top:649.70px;transform:scaleX(0.8876);transform-origin:100% 0">0,000</div>
<div class="t g" style="left:1667.4px;width:78.4px;text-align:right;top:649.70px;transform:scaleX(0.8876);transform-origin:100% 0">1,000</div>
<div class="t g" style="left:1748.3px;width:78.0px;text-align:right;top:649.70px;transform:scaleX(0.8876);transform-origin:100% 0">1,000</div>
<div class="t g" style="left:1828.8px;width:78.0px;text-align:right;top:649.70px;transform:scaleX(0.8876);transform-origin:100% 0">0,000</div>
<div class="t g" style="left:1909.3px;width:91.0px;text-align:center;top:649.70px;transform:scaleX(0.9595);transform-origin:50% 0">02/02/2021</div>
<div class="t g" style="left:2003.8px;top:649.70px;transform:scaleX(0.8420);transform-origin:0 0">F</div>
<div class="t g" style="left:2044.9px;top:649.70px;transform:scaleX(0.8420);transform-origin:0 0">CDE</div>
<div class="t g" style="left:2085.7px;top:649.70px;transform:scaleX(0.8394);transform-origin:0 0">C210200001</div>
<div class="t g" style="left:2176.2px;top:649.70px;transform:scaleX(0.8391);transform-origin:0 0">01</div>
<div class="t g" style="left:2226.8px;top:649.70px;transform:scaleX(0.8898);transform-origin:0 0">21050001+</div>
<div class="a" style="left:547px;top:667.17px;width:1767.3px;height:19.88px;background:#efefef"></div>
<div class="a" style="left:547px;top:686.05px;width:1767.3px;height:1px;border-top:1px dotted #c6c6c6"></div>
<div class="a" style="left:507px;top:686.05px;width:40px;height:1.5px;background:#a9bedb"></div>
<div class="t g" style="left:550.5px;top:669.57px;transform:scaleX(0.8420);transform-origin:0 0">C</div>
<div class="t g" style="left:581.0px;top:669.57px;transform:scaleX(0.8817);transform-origin:0 0">C210200002/01</div>
<div class="t g" style="left:691.7px;top:669.57px;transform:scaleX(0.8822);transform-origin:0 0">Ensemble</div>
<div class="t g" style="left:1388.2px;top:669.57px;transform:scaleX(0.8420);transform-origin:0 0">R</div>
<div class="t g" style="left:1415.7px;width:90.9px;text-align:center;top:669.57px;transform:scaleX(0.9595);transform-origin:50% 0">09/02/2021</div>
<div class="t g" style="left:1510.1px;top:669.57px;transform:scaleX(0.8626);transform-origin:0 0">Un</div>
<div class="t g" style="left:1567.0px;width:97.9px;text-align:right;top:669.57px;transform:scaleX(0.8876);transform-origin:100% 0">1,000</div>
<div class="t g" style="left:1667.4px;width:78.4px;text-align:right;top:669.57px;transform:scaleX(0.8876);transform-origin:100% 0">1,000</div>
<div class="t g" style="left:1748.3px;width:78.0px;text-align:right;top:669.57px;transform:scaleX(0.8876);transform-origin:100% 0">0,000</div>
<div class="t g" style="left:1828.8px;width:78.0px;text-align:right;top:669.57px;transform:scaleX(0.8876);transform-origin:100% 0">0,000</div>
<div class="t g" style="left:1909.3px;width:91.0px;text-align:center;top:669.57px;transform:scaleX(0.9595);transform-origin:50% 0">09/02/2021</div>
<div class="t g" style="left:2003.8px;top:669.57px;transform:scaleX(0.8420);transform-origin:0 0">F</div>
<div class="t g" style="left:2044.9px;top:669.57px;transform:scaleX(0.8420);transform-origin:0 0">CDE</div>
<div class="t g" style="left:2085.7px;top:669.57px;transform:scaleX(0.8394);transform-origin:0 0">C210200002</div>
<div class="t g" style="left:2176.2px;top:669.57px;transform:scaleX(0.8391);transform-origin:0 0">01</div>
<div class="a" style="left:547px;top:705.92px;width:1767.3px;height:1px;border-top:1px dotted #c6c6c6"></div>
<div class="a" style="left:507px;top:705.92px;width:40px;height:1.5px;background:#a9bedb"></div>
<div class="t g" style="left:550.5px;top:689.45px;transform:scaleX(0.8420);transform-origin:0 0">C</div>
<div class="t g" style="left:581.0px;top:689.45px;transform:scaleX(0.8817);transform-origin:0 0">C210200003/01</div>
<div class="t g" style="left:691.7px;top:689.45px;transform:scaleX(0.8822);transform-origin:0 0">Ensemble</div>
<div class="t g" style="left:1415.7px;width:90.9px;text-align:center;top:689.45px;transform:scaleX(0.9595);transform-origin:50% 0">09/02/2021</div>
<div class="t g" style="left:1510.1px;top:689.45px;transform:scaleX(0.8626);transform-origin:0 0">Un</div>
<div class="t g" style="left:1567.0px;width:97.9px;text-align:right;top:689.45px;transform:scaleX(0.8876);transform-origin:100% 0">0,000</div>
<div class="t g" style="left:1667.4px;width:78.4px;text-align:right;top:689.45px;transform:scaleX(0.8876);transform-origin:100% 0">1,000</div>
<div class="t g" style="left:1748.3px;width:78.0px;text-align:right;top:689.45px;transform:scaleX(0.8876);transform-origin:100% 0">1,000</div>
<div class="t g" style="left:1828.8px;width:78.0px;text-align:right;top:689.45px;transform:scaleX(0.8876);transform-origin:100% 0">0,000</div>
<div class="t g" style="left:1909.3px;width:91.0px;text-align:center;top:689.45px;transform:scaleX(0.9595);transform-origin:50% 0">09/02/2021</div>
<div class="t g" style="left:2003.8px;top:689.45px;transform:scaleX(0.8420);transform-origin:0 0">F</div>
<div class="t g" style="left:2044.9px;top:689.45px;transform:scaleX(0.8420);transform-origin:0 0">CDE</div>
<div class="t g" style="left:2085.7px;top:689.45px;transform:scaleX(0.8394);transform-origin:0 0">C210200003</div>
<div class="t g" style="left:2176.2px;top:689.45px;transform:scaleX(0.8391);transform-origin:0 0">01</div>
<div class="t g" style="left:2226.8px;top:689.45px;transform:scaleX(0.8391);transform-origin:0 0">21060001</div>
<div class="a" style="left:547px;top:706.92px;width:1767.3px;height:19.88px;background:#efefef"></div>
<div class="a" style="left:547px;top:725.80px;width:1767.3px;height:1px;border-top:1px dotted #c6c6c6"></div>
<div class="a" style="left:507px;top:725.80px;width:40px;height:1.5px;background:#a9bedb"></div>
<div class="t g" style="left:550.5px;top:709.32px;transform:scaleX(0.8420);transform-origin:0 0">C</div>
<div class="t g" style="left:581.0px;top:709.32px;transform:scaleX(0.8817);transform-origin:0 0">C210300007/04</div>
<div class="t g" style="left:691.7px;top:709.32px;transform:scaleX(0.8822);transform-origin:0 0">Ensemble</div>
<div class="t g" style="left:1388.2px;top:709.32px;transform:scaleX(0.8420);transform-origin:0 0">R</div>
<div class="t g" style="left:1415.7px;width:90.9px;text-align:center;top:709.32px;transform:scaleX(0.9595);transform-origin:50% 0">15/03/2021</div>
<div class="t g" style="left:1510.1px;top:709.32px;transform:scaleX(0.8626);transform-origin:0 0">Un</div>
<div class="t g" style="left:1567.0px;width:97.9px;text-align:right;top:709.32px;transform:scaleX(0.8876);transform-origin:100% 0">1,000</div>
<div class="t g" style="left:1667.4px;width:78.4px;text-align:right;top:709.32px;transform:scaleX(0.8876);transform-origin:100% 0">1,000</div>
<div class="t g" style="left:1748.3px;width:78.0px;text-align:right;top:709.32px;transform:scaleX(0.8876);transform-origin:100% 0">0,000</div>
<div class="t g" style="left:1828.8px;width:78.0px;text-align:right;top:709.32px;transform:scaleX(0.8876);transform-origin:100% 0">0,000</div>
<div class="t g" style="left:1909.3px;width:91.0px;text-align:center;top:709.32px;transform:scaleX(0.9595);transform-origin:50% 0">15/03/2021</div>
<div class="t g" style="left:2003.8px;top:709.32px;transform:scaleX(0.8420);transform-origin:0 0">F</div>
<div class="t g" style="left:2044.9px;top:709.32px;transform:scaleX(0.8420);transform-origin:0 0">CDE</div>
<div class="t g" style="left:2085.7px;top:709.32px;transform:scaleX(0.8394);transform-origin:0 0">C210300007</div>
<div class="t g" style="left:2176.2px;top:709.32px;transform:scaleX(0.8391);transform-origin:0 0">04</div>
<div class="a" style="left:547px;top:745.68px;width:1767.3px;height:1px;border-top:1px dotted #c6c6c6"></div>
<div class="a" style="left:507px;top:745.68px;width:40px;height:1.5px;background:#a9bedb"></div>
<div class="t g" style="left:550.5px;top:729.20px;transform:scaleX(0.8420);transform-origin:0 0">C</div>
<div class="t g" style="left:581.0px;top:729.20px;transform:scaleX(0.8817);transform-origin:0 0">C210300007/06</div>
<div class="t g" style="left:691.7px;top:729.20px;transform:scaleX(0.8822);transform-origin:0 0">Ensemble</div>
<div class="t g" style="left:1388.2px;top:729.20px;transform:scaleX(0.8420);transform-origin:0 0">R</div>
<div class="t g" style="left:1415.7px;width:90.9px;text-align:center;top:729.20px;transform:scaleX(0.9595);transform-origin:50% 0">15/03/2021</div>
<div class="t g" style="left:1510.1px;top:729.20px;transform:scaleX(0.8626);transform-origin:0 0">Un</div>
<div class="t g" style="left:1567.0px;width:97.9px;text-align:right;top:729.20px;transform:scaleX(0.8876);transform-origin:100% 0">1,000</div>
<div class="t g" style="left:1667.4px;width:78.4px;text-align:right;top:729.20px;transform:scaleX(0.8876);transform-origin:100% 0">1,000</div>
<div class="t g" style="left:1748.3px;width:78.0px;text-align:right;top:729.20px;transform:scaleX(0.8876);transform-origin:100% 0">0,000</div>
<div class="t g" style="left:1828.8px;width:78.0px;text-align:right;top:729.20px;transform:scaleX(0.8876);transform-origin:100% 0">0,000</div>
<div class="t g" style="left:1909.3px;width:91.0px;text-align:center;top:729.20px;transform:scaleX(0.9595);transform-origin:50% 0">15/03/2021</div>
<div class="t g" style="left:2003.8px;top:729.20px;transform:scaleX(0.8420);transform-origin:0 0">F</div>
<div class="t g" style="left:2044.9px;top:729.20px;transform:scaleX(0.8420);transform-origin:0 0">CDE</div>
<div class="t g" style="left:2085.7px;top:729.20px;transform:scaleX(0.8394);transform-origin:0 0">C210300007</div>
<div class="t g" style="left:2176.2px;top:729.20px;transform:scaleX(0.8391);transform-origin:0 0">06</div>
<div class="a" style="left:547px;top:746.68px;width:1767.3px;height:19.88px;background:#efefef"></div>
<div class="a" style="left:547px;top:765.55px;width:1767.3px;height:1px;border-top:1px dotted #c6c6c6"></div>
<div class="a" style="left:507px;top:765.55px;width:40px;height:1.5px;background:#a9bedb"></div>
<div class="t g" style="left:550.5px;top:749.08px;transform:scaleX(0.8420);transform-origin:0 0">C</div>
<div class="t g" style="left:581.0px;top:749.08px;transform:scaleX(0.8817);transform-origin:0 0">C210300008/04</div>
<div class="t g" style="left:691.7px;top:749.08px;transform:scaleX(0.8796);transform-origin:0 0">Scénario Standard Menuiserie</div>
<div class="t g" style="left:1388.2px;top:749.08px;transform:scaleX(0.8420);transform-origin:0 0">R</div>
<div class="t g" style="left:1415.7px;width:90.9px;text-align:center;top:749.08px;transform:scaleX(0.9595);transform-origin:50% 0">22/03/2021</div>
<div class="t g" style="left:1510.1px;top:749.08px;transform:scaleX(0.8626);transform-origin:0 0">Un</div>
<div class="t g" style="left:1567.0px;width:97.9px;text-align:right;top:749.08px;transform:scaleX(0.8876);transform-origin:100% 0">1,000</div>
<div class="t g" style="left:1667.4px;width:78.4px;text-align:right;top:749.08px;transform:scaleX(0.8876);transform-origin:100% 0">1,000</div>
<div class="t g" style="left:1748.3px;width:78.0px;text-align:right;top:749.08px;transform:scaleX(0.8876);transform-origin:100% 0">0,000</div>
<div class="t g" style="left:1828.8px;width:78.0px;text-align:right;top:749.08px;transform:scaleX(0.8876);transform-origin:100% 0">0,000</div>
<div class="t g" style="left:1909.3px;width:91.0px;text-align:center;top:749.08px;transform:scaleX(0.9739);transform-origin:50% 0">11/03/2021</div>
<div class="t g" style="left:2003.8px;top:749.08px;transform:scaleX(0.8420);transform-origin:0 0">F</div>
<div class="t g" style="left:2044.9px;top:749.08px;transform:scaleX(0.8420);transform-origin:0 0">CDE</div>
<div class="t g" style="left:2085.7px;top:749.08px;transform:scaleX(0.8394);transform-origin:0 0">C210300008</div>
<div class="t g" style="left:2176.2px;top:749.08px;transform:scaleX(0.8391);transform-origin:0 0">04</div>
<div class="a" style="left:547px;top:785.43px;width:1767.3px;height:1px;border-top:1px dotted #c6c6c6"></div>
<div class="a" style="left:507px;top:785.43px;width:40px;height:1.5px;background:#a9bedb"></div>
<div class="t g" style="left:550.5px;top:768.95px;transform:scaleX(0.8420);transform-origin:0 0">C</div>
<div class="t g" style="left:581.0px;top:768.95px;transform:scaleX(0.8817);transform-origin:0 0">C210400002/01</div>
<div class="t g" style="left:691.7px;top:768.95px;transform:scaleX(0.8796);transform-origin:0 0">Scénario Standard Menuiserie</div>
<div class="t g" style="left:1415.7px;width:90.9px;text-align:center;top:768.95px;transform:scaleX(0.9595);transform-origin:50% 0">12/04/2021</div>
<div class="t g" style="left:1510.1px;top:768.95px;transform:scaleX(0.8626);transform-origin:0 0">Un</div>
<div class="t g" style="left:1567.0px;width:97.9px;text-align:right;top:768.95px;transform:scaleX(0.8876);transform-origin:100% 0">0,000</div>
<div class="t g" style="left:1667.4px;width:78.4px;text-align:right;top:768.95px;transform:scaleX(0.8876);transform-origin:100% 0">1,000</div>
<div class="t g" style="left:1748.3px;width:78.0px;text-align:right;top:768.95px;transform:scaleX(0.8876);transform-origin:100% 0">1,000</div>
<div class="t g" style="left:1828.8px;width:78.0px;text-align:right;top:768.95px;transform:scaleX(0.8876);transform-origin:100% 0">0,000</div>
<div class="t g" style="left:1909.3px;width:91.0px;text-align:center;top:768.95px;transform:scaleX(0.9595);transform-origin:50% 0">01/04/2021</div>
<div class="t g" style="left:2003.8px;top:768.95px;transform:scaleX(0.8420);transform-origin:0 0">F</div>
<div class="t g" style="left:2044.9px;top:768.95px;transform:scaleX(0.8420);transform-origin:0 0">CDE</div>
<div class="t g" style="left:2085.7px;top:768.95px;transform:scaleX(0.8394);transform-origin:0 0">C210400002</div>
<div class="t g" style="left:2176.2px;top:768.95px;transform:scaleX(0.8391);transform-origin:0 0">01</div>
<div class="t g" style="left:2226.8px;top:768.95px;transform:scaleX(0.8518);transform-origin:0 0">P21150001</div>
<div class="a" style="left:547px;top:786.43px;width:1767.3px;height:19.88px;background:#efefef"></div>
<div class="a" style="left:547px;top:805.30px;width:1767.3px;height:1px;border-top:1px dotted #c6c6c6"></div>
<div class="a" style="left:507px;top:805.30px;width:40px;height:1.5px;background:#a9bedb"></div>
<div class="t g" style="left:550.5px;top:788.83px;transform:scaleX(0.8420);transform-origin:0 0">C</div>
<div class="t g" style="left:581.0px;top:788.83px;transform:scaleX(0.8817);transform-origin:0 0">C210400002/02</div>
<div class="t g" style="left:691.7px;top:788.83px;transform:scaleX(0.8796);transform-origin:0 0">Scénario Standard Menuiserie</div>
<div class="t g" style="left:1415.7px;width:90.9px;text-align:center;top:788.83px;transform:scaleX(0.9595);transform-origin:50% 0">06/09/2021</div>
<div class="t g" style="left:1510.1px;top:788.83px;transform:scaleX(0.8626);transform-origin:0 0">Un</div>
<div class="t g" style="left:1567.0px;width:97.9px;text-align:right;top:788.83px;transform:scaleX(0.8876);transform-origin:100% 0">0,000</div>
<div class="t g" style="left:1667.4px;width:78.4px;text-align:right;top:788.83px;transform:scaleX(0.8876);transform-origin:100% 0">1,000</div>
<div class="t g" style="left:1748.3px;width:78.0px;text-align:right;top:788.83px;transform:scaleX(0.8876);transform-origin:100% 0">1,000</div>
<div class="t g" style="left:1828.8px;width:78.0px;text-align:right;top:788.83px;transform:scaleX(0.8876);transform-origin:100% 0">0,000</div>
<div class="t g" style="left:1909.3px;width:91.0px;text-align:center;top:788.83px;transform:scaleX(0.9595);transform-origin:50% 0">26/08/2021</div>
<div class="t g" style="left:2003.8px;top:788.83px;transform:scaleX(0.8420);transform-origin:0 0">F</div>
<div class="t g" style="left:2044.9px;top:788.83px;transform:scaleX(0.8420);transform-origin:0 0">CDE</div>
<div class="t g" style="left:2085.7px;top:788.83px;transform:scaleX(0.8394);transform-origin:0 0">C210400002</div>
<div class="t g" style="left:2176.2px;top:788.83px;transform:scaleX(0.8391);transform-origin:0 0">02</div>
<div class="t g" style="left:2226.8px;top:788.83px;transform:scaleX(0.8958);transform-origin:0 0">P21150001+</div>
<div class="a" style="left:547px;top:825.18px;width:1767.3px;height:1px;border-top:1px dotted #c6c6c6"></div>
<div class="a" style="left:507px;top:825.18px;width:40px;height:1.5px;background:#a9bedb"></div>
<div class="t g" style="left:550.5px;top:808.70px;transform:scaleX(0.8420);transform-origin:0 0">C</div>
<div class="t g" style="left:581.0px;top:808.70px;transform:scaleX(0.8817);transform-origin:0 0">C210400003/01</div>
<div class="t g" style="left:691.7px;top:808.70px;transform:scaleX(0.8796);transform-origin:0 0">Scénario Standard Menuiserie</div>
<div class="t g" style="left:1388.2px;top:808.70px;transform:scaleX(0.8420);transform-origin:0 0">R</div>
<div class="t g" style="left:1415.7px;width:90.9px;text-align:center;top:808.70px;transform:scaleX(0.9595);transform-origin:50% 0">12/04/2021</div>
<div class="t g" style="left:1510.1px;top:808.70px;transform:scaleX(0.8626);transform-origin:0 0">Un</div>
<div class="t g" style="left:1567.0px;width:97.9px;text-align:right;top:808.70px;transform:scaleX(0.8876);transform-origin:100% 0">0,000</div>
<div class="t g" style="left:1667.4px;width:78.4px;text-align:right;top:808.70px;transform:scaleX(0.8787);transform-origin:100% 0">12,000</div>
<div class="t g" style="left:1748.3px;width:78.0px;text-align:right;top:808.70px;transform:scaleX(0.8876);transform-origin:100% 0">0,000</div>
<div class="t g" style="left:1828.8px;width:78.0px;text-align:right;top:808.70px;transform:scaleX(0.8787);transform-origin:100% 0">12,000</div>
<div class="t g" style="left:1909.3px;width:91.0px;text-align:center;top:808.70px;transform:scaleX(0.9595);transform-origin:50% 0">01/04/2021</div>
<div class="t g" style="left:2003.8px;top:808.70px;transform:scaleX(0.8420);transform-origin:0 0">F</div>
<div class="t g" style="left:2044.9px;top:808.70px;transform:scaleX(0.8420);transform-origin:0 0">CDE</div>
<div class="t g" style="left:2085.7px;top:808.70px;transform:scaleX(0.8394);transform-origin:0 0">C210400003</div>
<div class="t g" style="left:2176.2px;top:808.70px;transform:scaleX(0.8391);transform-origin:0 0">01</div>
<div class="t g" style="left:2226.8px;top:808.70px;transform:scaleX(0.8518);transform-origin:0 0">P21160001</div>
<div class="a" style="left:547px;top:826.18px;width:1767.3px;height:19.88px;background:#efefef"></div>
<div class="a" style="left:547px;top:845.06px;width:1767.3px;height:1px;border-top:1px dotted #c6c6c6"></div>
<div class="a" style="left:507px;top:845.06px;width:40px;height:1.5px;background:#a9bedb"></div>
<div class="t g" style="left:550.5px;top:828.58px;transform:scaleX(0.8420);transform-origin:0 0">C</div>
<div class="t g" style="left:581.0px;top:828.58px;transform:scaleX(0.8817);transform-origin:0 0">C210400009/01</div>
<div class="t g" style="left:691.7px;top:828.58px;transform:scaleX(0.8796);transform-origin:0 0">Scénario Standard Menuiserie</div>
<div class="t g" style="left:1415.7px;width:90.9px;text-align:center;top:828.58px;transform:scaleX(0.9595);transform-origin:50% 0">10/05/2021</div>
<div class="t g" style="left:1510.1px;top:828.58px;transform:scaleX(0.8626);transform-origin:0 0">Un</div>
<div class="t g" style="left:1567.0px;width:97.9px;text-align:right;top:828.58px;transform:scaleX(0.8876);transform-origin:100% 0">0,000</div>
<div class="t g" style="left:1667.4px;width:78.4px;text-align:right;top:828.58px;transform:scaleX(0.8876);transform-origin:100% 0">1,000</div>
<div class="t g" style="left:1748.3px;width:78.0px;text-align:right;top:828.58px;transform:scaleX(0.8876);transform-origin:100% 0">1,000</div>
<div class="t g" style="left:1828.8px;width:78.0px;text-align:right;top:828.58px;transform:scaleX(0.8876);transform-origin:100% 0">0,000</div>
<div class="t g" style="left:1909.3px;width:91.0px;text-align:center;top:828.58px;transform:scaleX(0.9595);transform-origin:50% 0">29/04/2021</div>
<div class="t g" style="left:2003.8px;top:828.58px;transform:scaleX(0.8420);transform-origin:0 0">F</div>
<div class="t g" style="left:2044.9px;top:828.58px;transform:scaleX(0.8420);transform-origin:0 0">CDE</div>
<div class="t g" style="left:2085.7px;top:828.58px;transform:scaleX(0.8394);transform-origin:0 0">C210400009</div>
<div class="t g" style="left:2176.2px;top:828.58px;transform:scaleX(0.8391);transform-origin:0 0">01</div>
<div class="t g" style="left:2226.8px;top:828.58px;transform:scaleX(0.8518);transform-origin:0 0">P21190003</div>
<div class="a" style="left:547px;top:864.93px;width:1767.3px;height:1px;border-top:1px dotted #c6c6c6"></div>
<div class="a" style="left:507px;top:864.93px;width:40px;height:1.5px;background:#a9bedb"></div>
<div class="t g" style="left:550.5px;top:848.46px;transform:scaleX(0.8420);transform-origin:0 0">C</div>
<div class="t g" style="left:581.0px;top:848.46px;transform:scaleX(0.8817);transform-origin:0 0">C210400009/04</div>
<div class="t g" style="left:691.7px;top:848.46px;transform:scaleX(0.8828);transform-origin:0 0">Article extrudé laqué</div>
<div class="t g" style="left:1388.2px;top:848.46px;transform:scaleX(0.8420);transform-origin:0 0">R</div>
<div class="t g" style="left:1415.7px;width:90.9px;text-align:center;top:848.46px;transform:scaleX(0.9595);transform-origin:50% 0">10/05/2021</div>
<div class="t g" style="left:1510.1px;top:848.46px;transform:scaleX(0.8420);transform-origin:0 0">BARRE</div>
<div class="t g" style="left:1567.0px;width:97.9px;text-align:right;top:848.46px;transform:scaleX(0.8876);transform-origin:100% 0">1,000</div>
<div class="t g" style="left:1667.4px;width:78.4px;text-align:right;top:848.46px;transform:scaleX(0.8876);transform-origin:100% 0">1,000</div>
<div class="t g" style="left:1748.3px;width:78.0px;text-align:right;top:848.46px;transform:scaleX(0.8876);transform-origin:100% 0">0,000</div>
<div class="t g" style="left:1828.8px;width:78.0px;text-align:right;top:848.46px;transform:scaleX(0.8876);transform-origin:100% 0">0,000</div>
<div class="t g" style="left:1909.3px;width:91.0px;text-align:center;top:848.46px;transform:scaleX(0.9595);transform-origin:50% 0">10/05/2021</div>
<div class="t g" style="left:2003.8px;top:848.46px;transform:scaleX(0.8420);transform-origin:0 0">F</div>
<div class="t g" style="left:2044.9px;top:848.46px;transform:scaleX(0.8420);transform-origin:0 0">CDE</div>
<div class="t g" style="left:2085.7px;top:848.46px;transform:scaleX(0.8394);transform-origin:0 0">C210400009</div>
<div class="t g" style="left:2176.2px;top:848.46px;transform:scaleX(0.8391);transform-origin:0 0">04</div>
<div class="a" style="left:547px;top:865.93px;width:1767.3px;height:19.88px;background:#efefef"></div>
<div class="a" style="left:547px;top:884.81px;width:1767.3px;height:1px;border-top:1px dotted #c6c6c6"></div>
<div class="a" style="left:507px;top:884.81px;width:40px;height:1.5px;background:#a9bedb"></div>
<div class="t g" style="left:550.5px;top:868.33px;transform:scaleX(0.8420);transform-origin:0 0">C</div>
<div class="t g" style="left:581.0px;top:868.33px;transform:scaleX(0.8910);transform-origin:0 0">C210400011/01</div>
<div class="t g" style="left:691.7px;top:868.33px;transform:scaleX(0.8796);transform-origin:0 0">Scénario Standard Menuiserie</div>
<div class="t g" style="left:1388.2px;top:868.33px;transform:scaleX(0.8420);transform-origin:0 0">R</div>
<div class="t g" style="left:1415.7px;width:90.9px;text-align:center;top:868.33px;transform:scaleX(0.9595);transform-origin:50% 0">12/04/2021</div>
<div class="t g" style="left:1510.1px;top:868.33px;transform:scaleX(0.8626);transform-origin:0 0">Un</div>
<div class="t g" style="left:1567.0px;width:97.9px;text-align:right;top:868.33px;transform:scaleX(0.8876);transform-origin:100% 0">4,000</div>
<div class="t g" style="left:1667.4px;width:78.4px;text-align:right;top:868.33px;transform:scaleX(0.8876);transform-origin:100% 0">4,000</div>
<div class="t g" style="left:1748.3px;width:78.0px;text-align:right;top:868.33px;transform:scaleX(0.8876);transform-origin:100% 0">0,000</div>
<div class="t g" style="left:1828.8px;width:78.0px;text-align:right;top:868.33px;transform:scaleX(0.8876);transform-origin:100% 0">0,000</div>
<div class="t g" style="left:1909.3px;width:91.0px;text-align:center;top:868.33px;transform:scaleX(0.9595);transform-origin:50% 0">01/04/2021</div>
<div class="t g" style="left:2003.8px;top:868.33px;transform:scaleX(0.8420);transform-origin:0 0">F</div>
<div class="t g" style="left:2044.9px;top:868.33px;transform:scaleX(0.8420);transform-origin:0 0">CDE</div>
<div class="t g" style="left:2085.7px;top:868.33px;transform:scaleX(0.8504);transform-origin:0 0">C210400011</div>
<div class="t g" style="left:2176.2px;top:868.33px;transform:scaleX(0.8391);transform-origin:0 0">01</div>
<div class="a" style="left:547px;top:904.68px;width:1767.3px;height:1px;border-top:1px dotted #c6c6c6"></div>
<div class="a" style="left:507px;top:904.68px;width:40px;height:1.5px;background:#a9bedb"></div>
<div class="t g" style="left:550.5px;top:888.21px;transform:scaleX(0.8420);transform-origin:0 0">C</div>
<div class="t g" style="left:581.0px;top:888.21px;transform:scaleX(0.8910);transform-origin:0 0">C210400011/02</div>
<div class="t g" style="left:691.7px;top:888.21px;transform:scaleX(0.8796);transform-origin:0 0">Scénario Standard Menuiserie</div>
<div class="t g" style="left:1388.2px;top:888.21px;transform:scaleX(0.8420);transform-origin:0 0">R</div>
<div class="t g" style="left:1415.7px;width:90.9px;text-align:center;top:888.21px;transform:scaleX(0.9595);transform-origin:50% 0">12/04/2021</div>
<div class="t g" style="left:1510.1px;top:888.21px;transform:scaleX(0.8626);transform-origin:0 0">Un</div>
<div class="t g" style="left:1567.0px;width:97.9px;text-align:right;top:888.21px;transform:scaleX(0.8876);transform-origin:100% 0">1,000</div>
<div class="t g" style="left:1667.4px;width:78.4px;text-align:right;top:888.21px;transform:scaleX(0.8876);transform-origin:100% 0">1,000</div>
<div class="t g" style="left:1748.3px;width:78.0px;text-align:right;top:888.21px;transform:scaleX(0.8876);transform-origin:100% 0">0,000</div>
<div class="t g" style="left:1828.8px;width:78.0px;text-align:right;top:888.21px;transform:scaleX(0.8876);transform-origin:100% 0">0,000</div>
<div class="t g" style="left:1909.3px;width:91.0px;text-align:center;top:888.21px;transform:scaleX(0.9595);transform-origin:50% 0">01/04/2021</div>
<div class="t g" style="left:2003.8px;top:888.21px;transform:scaleX(0.8420);transform-origin:0 0">F</div>
<div class="t g" style="left:2044.9px;top:888.21px;transform:scaleX(0.8420);transform-origin:0 0">CDE</div>
<div class="t g" style="left:2085.7px;top:888.21px;transform:scaleX(0.8504);transform-origin:0 0">C210400011</div>
<div class="t g" style="left:2176.2px;top:888.21px;transform:scaleX(0.8391);transform-origin:0 0">02</div>
<div class="a" style="left:547px;top:905.68px;width:1767.3px;height:19.88px;background:#efefef"></div>
<div class="a" style="left:547px;top:924.56px;width:1767.3px;height:1px;border-top:1px dotted #c6c6c6"></div>
<div class="a" style="left:507px;top:924.56px;width:40px;height:1.5px;background:#a9bedb"></div>
<div class="t g" style="left:550.5px;top:908.08px;transform:scaleX(0.8420);transform-origin:0 0">C</div>
<div class="t g" style="left:581.0px;top:908.08px;transform:scaleX(0.8817);transform-origin:0 0">C210400015/01</div>
<div class="t g" style="left:691.7px;top:908.08px;transform:scaleX(0.8796);transform-origin:0 0">Scénario Standard Menuiserie</div>
<div class="t g" style="left:1415.7px;width:90.9px;text-align:center;top:908.08px;transform:scaleX(0.9595);transform-origin:50% 0">17/05/2021</div>
<div class="t g" style="left:1510.1px;top:908.08px;transform:scaleX(0.8626);transform-origin:0 0">Un</div>
<div class="t g" style="left:1567.0px;width:97.9px;text-align:right;top:908.08px;transform:scaleX(0.8876);transform-origin:100% 0">0,000</div>
<div class="t g" style="left:1667.4px;width:78.4px;text-align:right;top:908.08px;transform:scaleX(0.8876);transform-origin:100% 0">1,000</div>
<div class="t g" style="left:1748.3px;width:78.0px;text-align:right;top:908.08px;transform:scaleX(0.8876);transform-origin:100% 0">1,000</div>
<div class="t g" style="left:1828.8px;width:78.0px;text-align:right;top:908.08px;transform:scaleX(0.8876);transform-origin:100% 0">0,000</div>
<div class="t g" style="left:1909.3px;width:91.0px;text-align:center;top:908.08px;transform:scaleX(0.9595);transform-origin:50% 0">06/05/2021</div>
<div class="t g" style="left:2003.8px;top:908.08px;transform:scaleX(0.8420);transform-origin:0 0">F</div>
<div class="t g" style="left:2044.9px;top:908.08px;transform:scaleX(0.8420);transform-origin:0 0">CDE</div>
<div class="t g" style="left:2085.7px;top:908.08px;transform:scaleX(0.8394);transform-origin:0 0">C210400015</div>
<div class="t g" style="left:2176.2px;top:908.08px;transform:scaleX(0.8391);transform-origin:0 0">01</div>
<div class="t g" style="left:2226.8px;top:908.08px;transform:scaleX(0.8394);transform-origin:0 0">P21200001</div>
<div class="a" style="left:547px;top:944.44px;width:1767.3px;height:1px;border-top:1px dotted #c6c6c6"></div>
<div class="a" style="left:507px;top:944.44px;width:40px;height:1.5px;background:#a9bedb"></div>
<div class="t g" style="left:550.5px;top:927.96px;transform:scaleX(0.8420);transform-origin:0 0">C</div>
<div class="t g" style="left:581.0px;top:927.96px;transform:scaleX(0.8817);transform-origin:0 0">C210400015/03</div>
<div class="t g" style="left:691.7px;top:927.96px;transform:scaleX(0.8796);transform-origin:0 0">Scénario Standard Menuiserie</div>
<div class="t g" style="left:1388.2px;top:927.96px;transform:scaleX(0.8420);transform-origin:0 0">R</div>
<div class="t g" style="left:1415.7px;width:90.9px;text-align:center;top:927.96px;transform:scaleX(0.9595);transform-origin:50% 0">17/05/2021</div>
<div class="t g" style="left:1510.1px;top:927.96px;transform:scaleX(0.8626);transform-origin:0 0">Un</div>
<div class="t g" style="left:1567.0px;width:97.9px;text-align:right;top:927.96px;transform:scaleX(0.8876);transform-origin:100% 0">1,000</div>
<div class="t g" style="left:1667.4px;width:78.4px;text-align:right;top:927.96px;transform:scaleX(0.8876);transform-origin:100% 0">1,000</div>
<div class="t g" style="left:1748.3px;width:78.0px;text-align:right;top:927.96px;transform:scaleX(0.8876);transform-origin:100% 0">0,000</div>
<div class="t g" style="left:1828.8px;width:78.0px;text-align:right;top:927.96px;transform:scaleX(0.8876);transform-origin:100% 0">0,000</div>
<div class="t g" style="left:1909.3px;width:91.0px;text-align:center;top:927.96px;transform:scaleX(0.9595);transform-origin:50% 0">06/05/2021</div>
<div class="t g" style="left:2003.8px;top:927.96px;transform:scaleX(0.8420);transform-origin:0 0">F</div>
<div class="t g" style="left:2044.9px;top:927.96px;transform:scaleX(0.8420);transform-origin:0 0">CDE</div>
<div class="t g" style="left:2085.7px;top:927.96px;transform:scaleX(0.8394);transform-origin:0 0">C210400015</div>
<div class="t g" style="left:2176.2px;top:927.96px;transform:scaleX(0.8391);transform-origin:0 0">03</div>
<div class="a" style="left:547px;top:945.44px;width:1767.3px;height:19.88px;background:#efefef"></div>
<div class="a" style="left:547px;top:964.31px;width:1767.3px;height:1px;border-top:1px dotted #c6c6c6"></div>
<div class="a" style="left:507px;top:964.31px;width:40px;height:1.5px;background:#a9bedb"></div>
<div class="t g" style="left:550.5px;top:947.84px;transform:scaleX(0.8420);transform-origin:0 0">C</div>
<div class="t g" style="left:581.0px;top:947.84px;transform:scaleX(0.8817);transform-origin:0 0">C210400016/02</div>
<div class="t g" style="left:691.7px;top:947.84px;transform:scaleX(0.8796);transform-origin:0 0">Scénario Standard Menuiserie</div>
<div class="t g" style="left:1415.7px;width:90.9px;text-align:center;top:947.84px;transform:scaleX(0.9595);transform-origin:50% 0">10/05/2021</div>
<div class="t g" style="left:1510.1px;top:947.84px;transform:scaleX(0.8626);transform-origin:0 0">Un</div>
<div class="t g" style="left:1567.0px;width:97.9px;text-align:right;top:947.84px;transform:scaleX(0.8876);transform-origin:100% 0">0,000</div>
<div class="t g" style="left:1667.4px;width:78.4px;text-align:right;top:947.84px;transform:scaleX(0.8876);transform-origin:100% 0">1,000</div>
<div class="t g" style="left:1748.3px;width:78.0px;text-align:right;top:947.84px;transform:scaleX(0.8876);transform-origin:100% 0">1,000</div>
<div class="t g" style="left:1828.8px;width:78.0px;text-align:right;top:947.84px;transform:scaleX(0.8876);transform-origin:100% 0">0,000</div>
<div class="t g" style="left:1909.3px;width:91.0px;text-align:center;top:947.84px;transform:scaleX(0.9595);transform-origin:50% 0">29/04/2021</div>
<div class="t g" style="left:2003.8px;top:947.84px;transform:scaleX(0.8420);transform-origin:0 0">F</div>
<div class="t g" style="left:2044.9px;top:947.84px;transform:scaleX(0.8420);transform-origin:0 0">CDE</div>
<div class="t g" style="left:2085.7px;top:947.84px;transform:scaleX(0.8394);transform-origin:0 0">C210400016</div>
<div class="t g" style="left:2176.2px;top:947.84px;transform:scaleX(0.8391);transform-origin:0 0">02</div>
<div class="t g" style="left:2226.8px;top:947.84px;transform:scaleX(0.8518);transform-origin:0 0">P21190005</div>
<div class="a" style="left:547px;top:984.19px;width:1767.3px;height:1px;border-top:1px dotted #c6c6c6"></div>
<div class="a" style="left:507px;top:984.19px;width:40px;height:1.5px;background:#a9bedb"></div>
<div class="t g" style="left:550.5px;top:967.71px;transform:scaleX(0.8420);transform-origin:0 0">C</div>
<div class="t g" style="left:581.0px;top:967.71px;transform:scaleX(0.8817);transform-origin:0 0">C210400016/04</div>
<div class="t g" style="left:691.7px;top:967.71px;transform:scaleX(0.8828);transform-origin:0 0">Article extrudé laqué</div>
<div class="t g" style="left:1388.2px;top:967.71px;transform:scaleX(0.8420);transform-origin:0 0">R</div>
<div class="t g" style="left:1415.7px;width:90.9px;text-align:center;top:967.71px;transform:scaleX(0.9595);transform-origin:50% 0">17/05/2021</div>
<div class="t g" style="left:1510.1px;top:967.71px;transform:scaleX(0.8420);transform-origin:0 0">BARRE</div>
<div class="t g" style="left:1567.0px;width:97.9px;text-align:right;top:967.71px;transform:scaleX(0.8876);transform-origin:100% 0">1,000</div>
<div class="t g" style="left:1667.4px;width:78.4px;text-align:right;top:967.71px;transform:scaleX(0.8876);transform-origin:100% 0">1,000</div>
<div class="t g" style="left:1748.3px;width:78.0px;text-align:right;top:967.71px;transform:scaleX(0.8876);transform-origin:100% 0">0,000</div>
<div class="t g" style="left:1828.8px;width:78.0px;text-align:right;top:967.71px;transform:scaleX(0.8876);transform-origin:100% 0">0,000</div>
<div class="t g" style="left:1909.3px;width:91.0px;text-align:center;top:967.71px;transform:scaleX(0.9595);transform-origin:50% 0">17/05/2021</div>
<div class="t g" style="left:2003.8px;top:967.71px;transform:scaleX(0.8420);transform-origin:0 0">F</div>
<div class="t g" style="left:2044.9px;top:967.71px;transform:scaleX(0.8420);transform-origin:0 0">CDE</div>
<div class="t g" style="left:2085.7px;top:967.71px;transform:scaleX(0.8394);transform-origin:0 0">C210400016</div>
<div class="t g" style="left:2176.2px;top:967.71px;transform:scaleX(0.8391);transform-origin:0 0">04</div>
<div class="a" style="left:547px;top:985.19px;width:1767.3px;height:19.88px;background:#efefef"></div>
<div class="a" style="left:547px;top:1004.06px;width:1767.3px;height:1px;border-top:1px dotted #c6c6c6"></div>
<div class="a" style="left:507px;top:1004.06px;width:40px;height:1.5px;background:#a9bedb"></div>
<div class="t g" style="left:550.5px;top:987.59px;transform:scaleX(0.8420);transform-origin:0 0">C</div>
<div class="t g" style="left:581.0px;top:987.59px;transform:scaleX(0.8817);transform-origin:0 0">C210400017/01</div>
<div class="t g" style="left:691.7px;top:987.59px;transform:scaleX(0.8796);transform-origin:0 0">Scénario Standard Menuiserie</div>
<div class="t g" style="left:1388.2px;top:987.59px;transform:scaleX(0.8420);transform-origin:0 0">R</div>
<div class="t g" style="left:1415.7px;width:90.9px;text-align:center;top:987.59px;transform:scaleX(0.9595);transform-origin:50% 0">17/05/2021</div>
<div class="t g" style="left:1510.1px;top:987.59px;transform:scaleX(0.8626);transform-origin:0 0">Un</div>
<div class="t g" style="left:1567.0px;width:97.9px;text-align:right;top:987.59px;transform:scaleX(0.8876);transform-origin:100% 0">1,000</div>
<div class="t g" style="left:1667.4px;width:78.4px;text-align:right;top:987.59px;transform:scaleX(0.8876);transform-origin:100% 0">1,000</div>
<div class="t g" style="left:1748.3px;width:78.0px;text-align:right;top:987.59px;transform:scaleX(0.8876);transform-origin:100% 0">0,000</div>
<div class="t g" style="left:1828.8px;width:78.0px;text-align:right;top:987.59px;transform:scaleX(0.8876);transform-origin:100% 0">0,000</div>
<div class="t g" style="left:1909.3px;width:91.0px;text-align:center;top:987.59px;transform:scaleX(0.9595);transform-origin:50% 0">06/05/2021</div>
<div class="t g" style="left:2003.8px;top:987.59px;transform:scaleX(0.8420);transform-origin:0 0">F</div>
<div class="t g" style="left:2044.9px;top:987.59px;transform:scaleX(0.8420);transform-origin:0 0">CDE</div>
<div class="t g" style="left:2085.7px;top:987.59px;transform:scaleX(0.8394);transform-origin:0 0">C210400017</div>
<div class="t g" style="left:2176.2px;top:987.59px;transform:scaleX(0.8391);transform-origin:0 0">01</div>
<div class="t g" style="left:550.5px;top:1007.46px;transform:scaleX(0.8420);transform-origin:0 0">C</div>
<div class="t g" style="left:581.0px;top:1007.46px;transform:scaleX(0.8817);transform-origin:0 0">C210400019/01</div>
<div class="t g" style="left:691.7px;top:1007.46px;transform:scaleX(0.8871);transform-origin:0 0">Menuiserie Rectangle avec Une zone principale - couleur Traffic white</div>
<div class="t g" style="left:691.7px;top:1023.36px;transform:scaleX(0.8689);transform-origin:0 0">H x L : 2200 mm x 1500 mm</div>
<div class="t g" style="left:691.7px;top:1039.26px;transform:scaleX(0.8925);transform-origin:0 0">Informations Dormant :</div>
<div class="t g" style="left:691.7px;top:1055.16px;transform:scaleX(0.8847);transform-origin:0 0">Géométrie de traverse :  Type de dormant : 1010412</div>
<div class="t g" style="left:1415.7px;width:90.9px;text-align:center;top:1007.46px;transform:scaleX(0.9595);transform-origin:50% 0">24/05/2021</div>
<div class="t g" style="left:1510.1px;top:1007.46px;transform:scaleX(0.8626);transform-origin:0 0">Un</div>
<div class="t g" style="left:1567.0px;width:97.9px;text-align:right;top:1007.46px;transform:scaleX(0.8876);transform-origin:100% 0">0,000</div>
<div class="t g" style="left:1667.4px;width:78.4px;text-align:right;top:1007.46px;transform:scaleX(0.8876);transform-origin:100% 0">1,000</div>
<div class="t g" style="left:1748.3px;width:78.0px;text-align:right;top:1007.46px;transform:scaleX(0.8876);transform-origin:100% 0">1,000</div>
<div class="t g" style="left:1828.8px;width:78.0px;text-align:right;top:1007.46px;transform:scaleX(0.8876);transform-origin:100% 0">0,000</div>
<div class="t g" style="left:1909.3px;width:91.0px;text-align:center;top:1007.46px;transform:scaleX(0.9595);transform-origin:50% 0">13/05/2021</div>
<div class="t g" style="left:2003.8px;top:1007.46px;transform:scaleX(0.8420);transform-origin:0 0">F</div>
<div class="t g" style="left:2044.9px;top:1007.46px;transform:scaleX(0.8420);transform-origin:0 0">CDE</div>
<div class="t g" style="left:2085.7px;top:1007.46px;transform:scaleX(0.8394);transform-origin:0 0">C210400019</div>
<div class="t g" style="left:2176.2px;top:1007.46px;transform:scaleX(0.8391);transform-origin:0 0">01</div>
<div class="t g" style="left:2226.8px;top:1007.46px;transform:scaleX(0.8394);transform-origin:0 0">P21210001</div>
<div class="a" style="left:577.0px;top:230px;width:1px;height:918px;border-left:1px dotted #d2d2d2"></div>
<div class="a" style="left:687.7px;top:230px;width:1px;height:918px;border-left:1px dotted #d2d2d2"></div>
<div class="a" style="left:1384.2px;top:230px;width:1px;height:918px;border-left:1px dotted #d2d2d2"></div>
<div class="a" style="left:1415.2px;top:230px;width:1px;height:918px;border-left:1px dotted #d2d2d2"></div>
<div class="a" style="left:1506.1px;top:230px;width:1px;height:918px;border-left:1px dotted #d2d2d2"></div>
<div class="a" style="left:1566.5px;top:230px;width:1px;height:918px;border-left:1px dotted #d2d2d2"></div>
<div class="a" style="left:1666.9px;top:230px;width:1px;height:918px;border-left:1px dotted #d2d2d2"></div>
<div class="a" style="left:1747.8px;top:230px;width:1px;height:918px;border-left:1px dotted #d2d2d2"></div>
<div class="a" style="left:1828.3px;top:230px;width:1px;height:918px;border-left:1px dotted #d2d2d2"></div>
<div class="a" style="left:1908.8px;top:230px;width:1px;height:918px;border-left:1px dotted #d2d2d2"></div>
<div class="a" style="left:1999.8px;top:230px;width:1px;height:918px;border-left:1px dotted #d2d2d2"></div>
<div class="a" style="left:2040.9px;top:230px;width:1px;height:918px;border-left:1px dotted #d2d2d2"></div>
<div class="a" style="left:2081.7px;top:230px;width:1px;height:918px;border-left:1px dotted #d2d2d2"></div>
<div class="a" style="left:2172.2px;top:230px;width:1px;height:918px;border-left:1px dotted #d2d2d2"></div>
<div class="a" style="left:2222.8px;top:230px;width:1px;height:918px;border-left:1px dotted #d2d2d2"></div>
<div class="a" style="left:1908.5px;top:230.5px;width:93px;height:21px;border:2.7px solid #111"></div>
<svg style="left:517px;top:310px" width="17" height="25" viewBox="0 0 17 25"><path d="M1 1v19l4.5-4.5 3.5 8 3-1.3-3.5-7.8h6.5z" fill="#fff" stroke="#2a2d38" stroke-width="1.6" stroke-linejoin="round"/></svg>
</body></html>
